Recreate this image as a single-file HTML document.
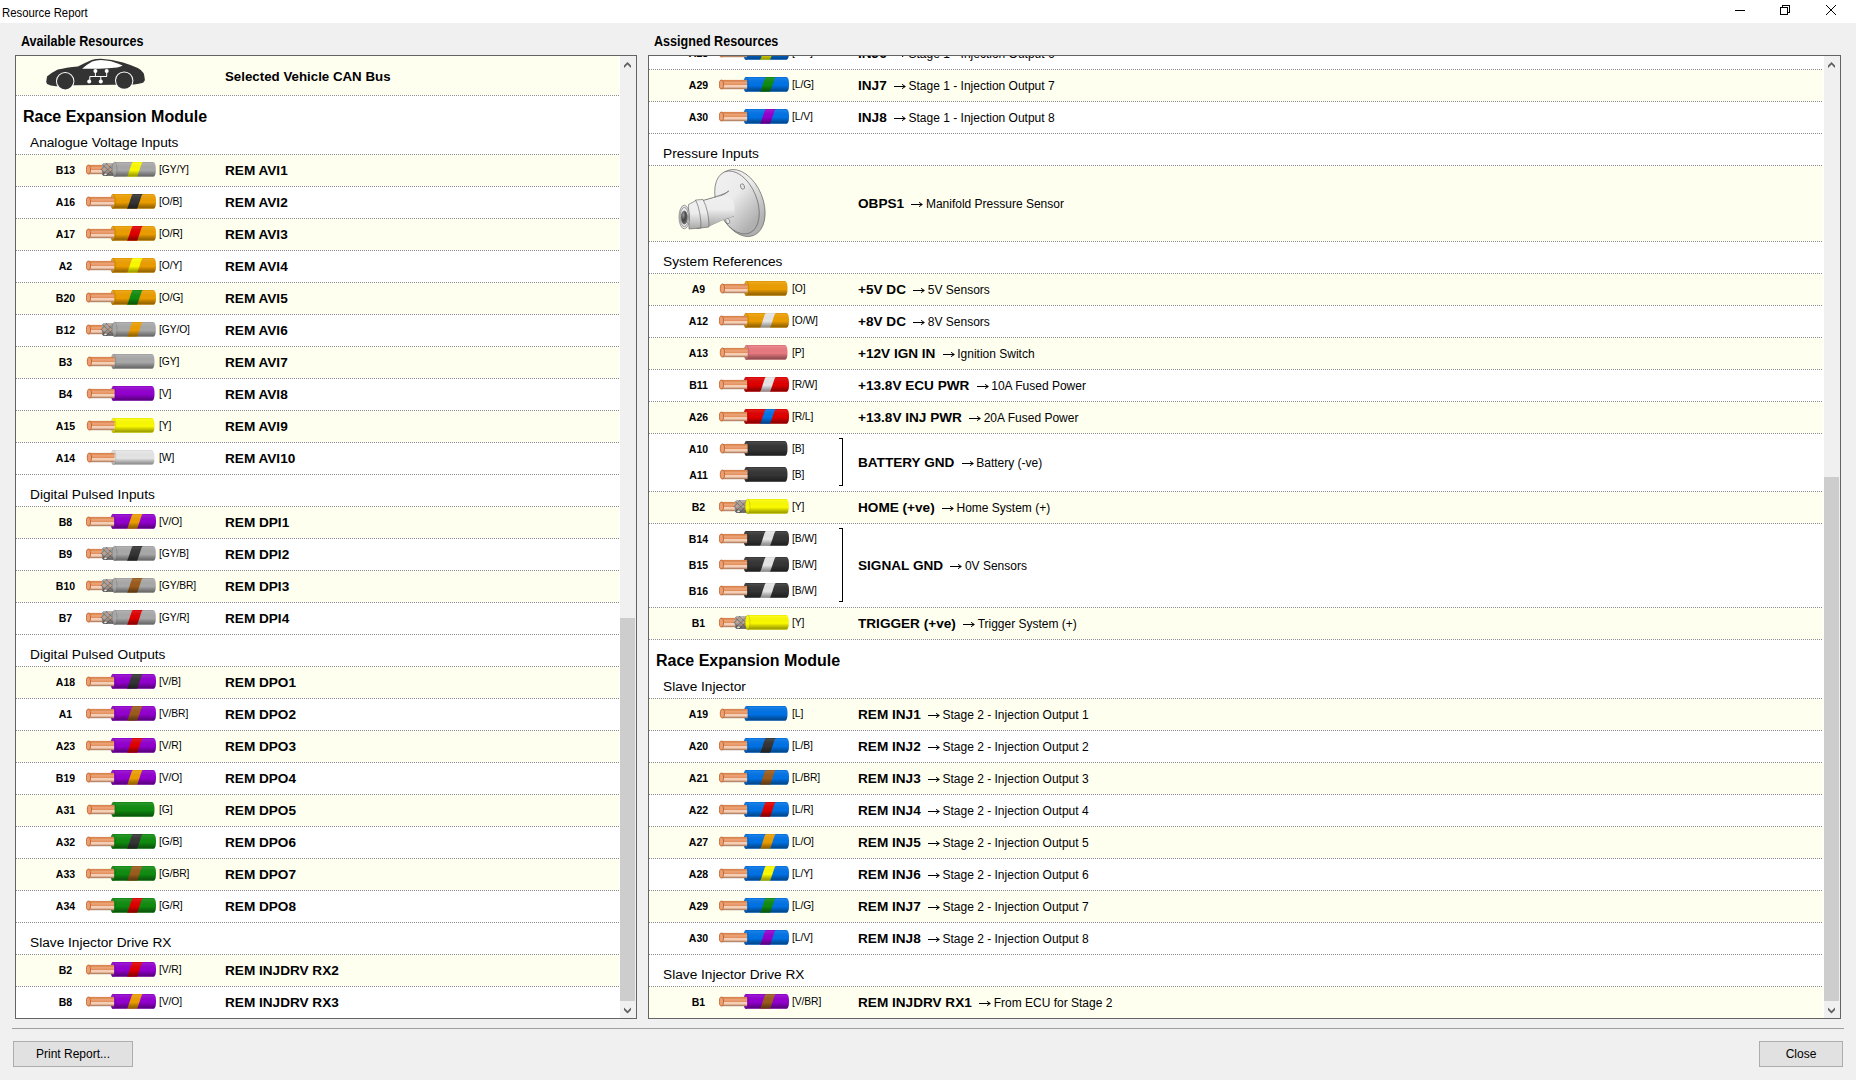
<!DOCTYPE html>
<html><head><meta charset="utf-8"><title>Resource Report</title>
<style>
*{box-sizing:border-box}
html,body{margin:0;padding:0}
body{width:1856px;height:1080px;background:#f0f0f0;position:relative;overflow:hidden;font-family:"Liberation Sans",sans-serif;color:#000}
.abs{position:absolute}
.title{position:absolute;left:0;top:0;width:1856px;height:23px;background:#fff}
.ttxt{position:absolute;left:2px;top:6px;font-size:12.2px;transform:scaleX(0.93);transform-origin:0 0}
.hdr{position:absolute;font-size:13.9px;font-weight:bold;top:33px;transform:scaleX(0.905);transform-origin:0 0}
.panel{position:absolute;top:55px;height:964px;border:1px solid #646464;background:#fff;overflow:hidden}
.content{position:absolute;left:0;top:0}
.bg{position:absolute;left:0;background:#fffff0}
.dl{position:absolute;left:0;height:1px;background:repeating-linear-gradient(90deg,#8c8c8c 0 1px,transparent 1px 2px)}
.pin{position:absolute;left:20px;width:59px;text-align:center;font-size:10.5px;font-weight:bold;line-height:14px}
.wi{position:absolute;left:70px;width:72px;height:22px}
.wi svg{display:block}
.cc{position:absolute;left:143px;font-size:10.3px;line-height:14px;letter-spacing:-0.1px}
.nm{position:absolute;left:209px;font-size:12px;line-height:14px;white-space:nowrap}
.nm b{font-size:13.6px;display:inline-block;transform:scaleY(0.885);transform-origin:0 80%}
.sv{font-size:13.3px;font-weight:bold}
.ar{display:inline-block;margin:0 2.5px 0 7.3px;vertical-align:1px}
.sec{position:absolute;left:14px;font-size:13.7px;line-height:16px;white-space:nowrap}
.mod{position:absolute;left:7px;font-size:16px;font-weight:bold;line-height:18px;white-space:nowrap}
.brk{position:absolute;left:190px;width:4px;border:1px solid #000;border-left:none}
.sb{position:absolute;top:0;width:16px;height:962px;background:#f0f0f0}
.thumb{position:absolute;left:0;width:15px;background:#cdcdcd}
.btn{position:absolute;top:1041px;height:26px;border:1px solid #adadad;background:#e1e1e1;font-size:12px;text-align:center;line-height:24px}
</style></head><body>
<div class="title"><div class="ttxt">Resource Report</div>
<div class="abs" style="left:1735px;top:10px;width:10px;height:1px;background:#000"></div>
<div class="abs" style="left:1782px;top:5px;width:8px;height:8px;border:1px solid #000"></div>
<div class="abs" style="left:1780px;top:7px;width:8px;height:8px;border:1px solid #000;background:#fff"></div>
<svg class="abs" style="left:1825px;top:4px" width="12" height="12" viewBox="0 0 12 12"><path d="M1,1 L11,11 M11,1 L1,11" stroke="#000" stroke-width="1"/></svg>
</div>
<div class="hdr" style="left:21px">Available Resources</div>
<div class="hdr" style="left:654px">Assigned Resources</div>
<div class="panel" style="left:15px;width:622px">
<div class="content"><div class="bg" style="top:0px;height:39px;width:603px"></div><div style="position:absolute;left:24px;top:0px"><svg width="112" height="36" viewBox="0 0 112 36">
<path d="M6.2,26 L7,20.5 Q11,17 17.8,13.6 Q26,11.5 37.9,10.4 Q45,7 51.6,4.1 Q56,2.6 61,2.7 Q72,3.5 83,6.5 Q91,9 97.8,11.9 Q102,14 103.7,17.2 Q104.6,20 104.9,24.3 L103.1,26.7 Q99,28 94.2,28.5 L74.7,28.7 L35.6,29.3 L16,30.2 Q10,29.5 7.1,27.9 Z" fill="#333"/>
<path d="M42.1,12.7 Q47,8.5 52.2,5.6 Q56,4 61,3.9 Q66,4 71.1,5.3 Q77,7 82.7,9.5 Q80,11 77.1,11.6 Q68,12.6 59.3,12.7 Z" fill="#fff"/>
<circle cx="25.2" cy="25.2" r="9.2" fill="#fff"/><circle cx="25.2" cy="25.2" r="8.2" fill="#333"/>
<circle cx="84.2" cy="24.6" r="9.2" fill="#fff"/><circle cx="84.2" cy="24.6" r="8.2" fill="#333"/>
<g stroke="#fff" stroke-width="1" fill="none"><path d="M55.4,15.1 V20.5 M66.7,15.1 V20.5 M49.8,20.5 H67 M49.8,20.5 V25.5 M60.8,21 V25.5"/></g>
<g fill="#fff"><circle cx="55.4" cy="15.1" r="2"/><circle cx="66.7" cy="15.1" r="2"/><circle cx="49.2" cy="25.5" r="2"/><circle cx="60.8" cy="25.5" r="2"/></g>
</svg></div><div class="nm sv" style="top:14px">Selected Vehicle CAN Bus</div><div class="dl" style="top:39px;width:603px"></div><div class="mod" style="top:52px">Race Expansion Module</div><div class="sec" style="top:79px">Analogue Voltage Inputs</div><div class="dl" style="top:98px;width:603px"></div><div class="bg" style="top:99px;height:31px;width:603px"></div><div class="pin" style="top:107px">B13</div><div class="wi" style="top:103px"><svg class="w" width="72" height="22" viewBox="0 0 72 22"><rect x="2.3" y="5.9" width="15.7" height="9.299999999999999" fill="url(#cu)"/><ellipse cx="2.4" cy="10.55" rx="2.1" ry="4.449999999999999" fill="#eaa074" stroke="#c25d24" stroke-width="0.9"/><path d="M17.0,4.2 L28.599999999999998,4.2 L28.599999999999998,16.9 L17.0,16.9 Q14.4,10.549999999999999 17.0,4.2 Z" fill="#a2a2a2"/><rect x="18.0" y="5.800000000000001" width="1.9" height="1.6" fill="#e2a078"/><rect x="22.0" y="5.4" width="1.9" height="1.6" fill="#e2a078"/><rect x="25.2" y="6.0" width="1.9" height="1.6" fill="#e2a078"/><rect x="17.2" y="9.0" width="1.9" height="1.6" fill="#e2a078"/><rect x="20.8" y="8.600000000000001" width="1.9" height="1.6" fill="#e2a078"/><rect x="24.4" y="9.4" width="1.9" height="1.6" fill="#e2a078"/><rect x="18.4" y="12.0" width="1.9" height="1.6" fill="#e2a078"/><rect x="22.2" y="11.8" width="1.9" height="1.6" fill="#e2a078"/><rect x="25.4" y="12.600000000000001" width="1.9" height="1.6" fill="#e2a078"/><rect x="19.6" y="14.600000000000001" width="1.9" height="1.6" fill="#e2a078"/><path d="M16.0,5.2 L28.599999999999998,16.9 M20.0,4.2 L28.599999999999998,12.2 M15.0,10.2 L21.0,16.9 M16.0,15.899999999999999 L28.599999999999998,4.2 M20.0,16.9 L28.599999999999998,8.899999999999999 M15.0,10.899999999999999 L21.0,4.2" stroke="#505050" stroke-width="0.5"/><path d="M17.0,4.2 L28.599999999999998,4.2 L28.599999999999998,16.9 L17.0,16.9 Q14.4,10.549999999999999 17.0,4.2 Z" fill="url(#shade)"/><ellipse cx="19.5" cy="15.3" rx="1.5" ry="0.8" fill="#f2f2f2"/><path d="M28.599999999999998,3.0 L67.0,3.0 C68.89999999999999,3.0 69.8,6.0 69.8,10.4 C69.8,14.8 68.89999999999999,17.8 67.0,17.8 L28.599999999999998,17.8 Z" fill="#a9a9a9"/><path d="M40.8,17.8 C42.3,17.8 45.4,3.0 46.9,3.0 L56.8,3.0 C55.3,3.0 52.2,17.8 50.7,17.8 Z" fill="#fbfb00"/><path d="M28.599999999999998,3.0 L67.0,3.0 C68.89999999999999,3.0 69.8,6.0 69.8,10.4 C69.8,14.8 68.89999999999999,17.8 67.0,17.8 L28.599999999999998,17.8 Z" fill="url(#shade)"/><ellipse cx="28.599999999999998" cy="10.4" rx="2.4" ry="7.4" fill="#a9a9a9"/><ellipse cx="28.599999999999998" cy="10.4" rx="2.4" ry="7.4" fill="url(#shade2)" stroke="rgba(0,0,0,0.22)" stroke-width="0.6"/></svg></div><div class="cc" style="top:107px">[GY/Y]</div><div class="nm" style="top:108px"><b>REM AVI1</b></div><div class="dl" style="top:130px;width:603px"></div><div class="pin" style="top:139px">A16</div><div class="wi" style="top:135px"><svg class="w" width="72" height="22" viewBox="0 0 72 22"><path d="M26.9,3.0 L67.2,3.0 C69.1,3.0 70.0,6.0 70.0,10.4 C70.0,14.8 69.1,17.8 67.2,17.8 L26.9,17.8 Z" fill="#ec9e00"/><path d="M40.8,17.8 C42.3,17.8 45.4,3.0 46.9,3.0 L56.8,3.0 C55.3,3.0 52.2,17.8 50.7,17.8 Z" fill="#353535"/><path d="M26.9,3.0 L67.2,3.0 C69.1,3.0 70.0,6.0 70.0,10.4 C70.0,14.8 69.1,17.8 67.2,17.8 L26.9,17.8 Z" fill="url(#shade)"/><ellipse cx="26.9" cy="10.4" rx="2.4" ry="7.4" fill="#ec9e00"/><ellipse cx="26.9" cy="10.4" rx="2.4" ry="7.4" fill="url(#shade2)" stroke="rgba(0,0,0,0.22)" stroke-width="0.6"/><rect x="2.3" y="5.9" width="25.799999999999997" height="9.299999999999999" fill="url(#cu)"/><ellipse cx="2.4" cy="10.55" rx="2.1" ry="4.449999999999999" fill="#eaa074" stroke="#c25d24" stroke-width="0.9"/></svg></div><div class="cc" style="top:139px">[O/B]</div><div class="nm" style="top:140px"><b>REM AVI2</b></div><div class="dl" style="top:162px;width:603px"></div><div class="bg" style="top:163px;height:31px;width:603px"></div><div class="pin" style="top:171px">A17</div><div class="wi" style="top:167px"><svg class="w" width="72" height="22" viewBox="0 0 72 22"><path d="M26.9,3.0 L67.2,3.0 C69.1,3.0 70.0,6.0 70.0,10.4 C70.0,14.8 69.1,17.8 67.2,17.8 L26.9,17.8 Z" fill="#ec9e00"/><path d="M40.8,17.8 C42.3,17.8 45.4,3.0 46.9,3.0 L56.8,3.0 C55.3,3.0 52.2,17.8 50.7,17.8 Z" fill="#e00000"/><path d="M26.9,3.0 L67.2,3.0 C69.1,3.0 70.0,6.0 70.0,10.4 C70.0,14.8 69.1,17.8 67.2,17.8 L26.9,17.8 Z" fill="url(#shade)"/><ellipse cx="26.9" cy="10.4" rx="2.4" ry="7.4" fill="#ec9e00"/><ellipse cx="26.9" cy="10.4" rx="2.4" ry="7.4" fill="url(#shade2)" stroke="rgba(0,0,0,0.22)" stroke-width="0.6"/><rect x="2.3" y="5.9" width="25.799999999999997" height="9.299999999999999" fill="url(#cu)"/><ellipse cx="2.4" cy="10.55" rx="2.1" ry="4.449999999999999" fill="#eaa074" stroke="#c25d24" stroke-width="0.9"/></svg></div><div class="cc" style="top:171px">[O/R]</div><div class="nm" style="top:172px"><b>REM AVI3</b></div><div class="dl" style="top:194px;width:603px"></div><div class="pin" style="top:203px">A2</div><div class="wi" style="top:199px"><svg class="w" width="72" height="22" viewBox="0 0 72 22"><path d="M26.9,3.0 L67.2,3.0 C69.1,3.0 70.0,6.0 70.0,10.4 C70.0,14.8 69.1,17.8 67.2,17.8 L26.9,17.8 Z" fill="#ec9e00"/><path d="M40.8,17.8 C42.3,17.8 45.4,3.0 46.9,3.0 L56.8,3.0 C55.3,3.0 52.2,17.8 50.7,17.8 Z" fill="#fbfb00"/><path d="M26.9,3.0 L67.2,3.0 C69.1,3.0 70.0,6.0 70.0,10.4 C70.0,14.8 69.1,17.8 67.2,17.8 L26.9,17.8 Z" fill="url(#shade)"/><ellipse cx="26.9" cy="10.4" rx="2.4" ry="7.4" fill="#ec9e00"/><ellipse cx="26.9" cy="10.4" rx="2.4" ry="7.4" fill="url(#shade2)" stroke="rgba(0,0,0,0.22)" stroke-width="0.6"/><rect x="2.3" y="5.9" width="25.799999999999997" height="9.299999999999999" fill="url(#cu)"/><ellipse cx="2.4" cy="10.55" rx="2.1" ry="4.449999999999999" fill="#eaa074" stroke="#c25d24" stroke-width="0.9"/></svg></div><div class="cc" style="top:203px">[O/Y]</div><div class="nm" style="top:204px"><b>REM AVI4</b></div><div class="dl" style="top:226px;width:603px"></div><div class="bg" style="top:227px;height:31px;width:603px"></div><div class="pin" style="top:235px">B20</div><div class="wi" style="top:231px"><svg class="w" width="72" height="22" viewBox="0 0 72 22"><path d="M26.9,3.0 L67.2,3.0 C69.1,3.0 70.0,6.0 70.0,10.4 C70.0,14.8 69.1,17.8 67.2,17.8 L26.9,17.8 Z" fill="#ec9e00"/><path d="M40.8,17.8 C42.3,17.8 45.4,3.0 46.9,3.0 L56.8,3.0 C55.3,3.0 52.2,17.8 50.7,17.8 Z" fill="#108c10"/><path d="M26.9,3.0 L67.2,3.0 C69.1,3.0 70.0,6.0 70.0,10.4 C70.0,14.8 69.1,17.8 67.2,17.8 L26.9,17.8 Z" fill="url(#shade)"/><ellipse cx="26.9" cy="10.4" rx="2.4" ry="7.4" fill="#ec9e00"/><ellipse cx="26.9" cy="10.4" rx="2.4" ry="7.4" fill="url(#shade2)" stroke="rgba(0,0,0,0.22)" stroke-width="0.6"/><rect x="2.3" y="5.9" width="25.799999999999997" height="9.299999999999999" fill="url(#cu)"/><ellipse cx="2.4" cy="10.55" rx="2.1" ry="4.449999999999999" fill="#eaa074" stroke="#c25d24" stroke-width="0.9"/></svg></div><div class="cc" style="top:235px">[O/G]</div><div class="nm" style="top:236px"><b>REM AVI5</b></div><div class="dl" style="top:258px;width:603px"></div><div class="pin" style="top:267px">B12</div><div class="wi" style="top:263px"><svg class="w" width="72" height="22" viewBox="0 0 72 22"><rect x="2.3" y="5.9" width="15.7" height="9.299999999999999" fill="url(#cu)"/><ellipse cx="2.4" cy="10.55" rx="2.1" ry="4.449999999999999" fill="#eaa074" stroke="#c25d24" stroke-width="0.9"/><path d="M17.0,4.2 L28.599999999999998,4.2 L28.599999999999998,16.9 L17.0,16.9 Q14.4,10.549999999999999 17.0,4.2 Z" fill="#a2a2a2"/><rect x="18.0" y="5.800000000000001" width="1.9" height="1.6" fill="#e2a078"/><rect x="22.0" y="5.4" width="1.9" height="1.6" fill="#e2a078"/><rect x="25.2" y="6.0" width="1.9" height="1.6" fill="#e2a078"/><rect x="17.2" y="9.0" width="1.9" height="1.6" fill="#e2a078"/><rect x="20.8" y="8.600000000000001" width="1.9" height="1.6" fill="#e2a078"/><rect x="24.4" y="9.4" width="1.9" height="1.6" fill="#e2a078"/><rect x="18.4" y="12.0" width="1.9" height="1.6" fill="#e2a078"/><rect x="22.2" y="11.8" width="1.9" height="1.6" fill="#e2a078"/><rect x="25.4" y="12.600000000000001" width="1.9" height="1.6" fill="#e2a078"/><rect x="19.6" y="14.600000000000001" width="1.9" height="1.6" fill="#e2a078"/><path d="M16.0,5.2 L28.599999999999998,16.9 M20.0,4.2 L28.599999999999998,12.2 M15.0,10.2 L21.0,16.9 M16.0,15.899999999999999 L28.599999999999998,4.2 M20.0,16.9 L28.599999999999998,8.899999999999999 M15.0,10.899999999999999 L21.0,4.2" stroke="#505050" stroke-width="0.5"/><path d="M17.0,4.2 L28.599999999999998,4.2 L28.599999999999998,16.9 L17.0,16.9 Q14.4,10.549999999999999 17.0,4.2 Z" fill="url(#shade)"/><ellipse cx="19.5" cy="15.3" rx="1.5" ry="0.8" fill="#f2f2f2"/><path d="M28.599999999999998,3.0 L67.0,3.0 C68.89999999999999,3.0 69.8,6.0 69.8,10.4 C69.8,14.8 68.89999999999999,17.8 67.0,17.8 L28.599999999999998,17.8 Z" fill="#a9a9a9"/><path d="M40.8,17.8 C42.3,17.8 45.4,3.0 46.9,3.0 L56.8,3.0 C55.3,3.0 52.2,17.8 50.7,17.8 Z" fill="#ec9e00"/><path d="M28.599999999999998,3.0 L67.0,3.0 C68.89999999999999,3.0 69.8,6.0 69.8,10.4 C69.8,14.8 68.89999999999999,17.8 67.0,17.8 L28.599999999999998,17.8 Z" fill="url(#shade)"/><ellipse cx="28.599999999999998" cy="10.4" rx="2.4" ry="7.4" fill="#a9a9a9"/><ellipse cx="28.599999999999998" cy="10.4" rx="2.4" ry="7.4" fill="url(#shade2)" stroke="rgba(0,0,0,0.22)" stroke-width="0.6"/></svg></div><div class="cc" style="top:267px">[GY/O]</div><div class="nm" style="top:268px"><b>REM AVI6</b></div><div class="dl" style="top:290px;width:603px"></div><div class="bg" style="top:291px;height:31px;width:603px"></div><div class="pin" style="top:299px">B3</div><div class="wi" style="top:295px"><svg class="w" width="72" height="22" viewBox="0 0 72 22"><path d="M27.4,3.0 L65.7,3.0 C67.6,3.0 68.5,6.0 68.5,10.4 C68.5,14.8 67.6,17.8 65.7,17.8 L27.4,17.8 Z" fill="#a9a9a9"/><path d="M27.4,3.0 L65.7,3.0 C67.6,3.0 68.5,6.0 68.5,10.4 C68.5,14.8 67.6,17.8 65.7,17.8 L27.4,17.8 Z" fill="url(#shade)"/><ellipse cx="27.4" cy="10.4" rx="2.4" ry="7.4" fill="#a9a9a9"/><ellipse cx="27.4" cy="10.4" rx="2.4" ry="7.4" fill="url(#shade2)" stroke="rgba(0,0,0,0.22)" stroke-width="0.6"/><rect x="3.3" y="5.9" width="25.299999999999997" height="9.299999999999999" fill="url(#cu)"/><ellipse cx="3.4" cy="10.55" rx="2.1" ry="4.449999999999999" fill="#eaa074" stroke="#c25d24" stroke-width="0.9"/></svg></div><div class="cc" style="top:299px">[GY]</div><div class="nm" style="top:300px"><b>REM AVI7</b></div><div class="dl" style="top:322px;width:603px"></div><div class="pin" style="top:331px">B4</div><div class="wi" style="top:327px"><svg class="w" width="72" height="22" viewBox="0 0 72 22"><path d="M27.4,3.0 L65.7,3.0 C67.6,3.0 68.5,6.0 68.5,10.4 C68.5,14.8 67.6,17.8 65.7,17.8 L27.4,17.8 Z" fill="#9300cf"/><path d="M27.4,3.0 L65.7,3.0 C67.6,3.0 68.5,6.0 68.5,10.4 C68.5,14.8 67.6,17.8 65.7,17.8 L27.4,17.8 Z" fill="url(#shade)"/><ellipse cx="27.4" cy="10.4" rx="2.4" ry="7.4" fill="#9300cf"/><ellipse cx="27.4" cy="10.4" rx="2.4" ry="7.4" fill="url(#shade2)" stroke="rgba(0,0,0,0.22)" stroke-width="0.6"/><rect x="3.3" y="5.9" width="25.299999999999997" height="9.299999999999999" fill="url(#cu)"/><ellipse cx="3.4" cy="10.55" rx="2.1" ry="4.449999999999999" fill="#eaa074" stroke="#c25d24" stroke-width="0.9"/></svg></div><div class="cc" style="top:331px">[V]</div><div class="nm" style="top:332px"><b>REM AVI8</b></div><div class="dl" style="top:354px;width:603px"></div><div class="bg" style="top:355px;height:31px;width:603px"></div><div class="pin" style="top:363px">A15</div><div class="wi" style="top:359px"><svg class="w" width="72" height="22" viewBox="0 0 72 22"><path d="M27.4,3.0 L65.7,3.0 C67.6,3.0 68.5,6.0 68.5,10.4 C68.5,14.8 67.6,17.8 65.7,17.8 L27.4,17.8 Z" fill="#fbfb00"/><path d="M27.4,3.0 L65.7,3.0 C67.6,3.0 68.5,6.0 68.5,10.4 C68.5,14.8 67.6,17.8 65.7,17.8 L27.4,17.8 Z" fill="url(#shade)"/><ellipse cx="27.4" cy="10.4" rx="2.4" ry="7.4" fill="#fbfb00"/><ellipse cx="27.4" cy="10.4" rx="2.4" ry="7.4" fill="url(#shade2)" stroke="rgba(0,0,0,0.22)" stroke-width="0.6"/><rect x="3.3" y="5.9" width="25.299999999999997" height="9.299999999999999" fill="url(#cu)"/><ellipse cx="3.4" cy="10.55" rx="2.1" ry="4.449999999999999" fill="#eaa074" stroke="#c25d24" stroke-width="0.9"/></svg></div><div class="cc" style="top:363px">[Y]</div><div class="nm" style="top:364px"><b>REM AVI9</b></div><div class="dl" style="top:386px;width:603px"></div><div class="pin" style="top:395px">A14</div><div class="wi" style="top:391px"><svg class="w" width="72" height="22" viewBox="0 0 72 22"><path d="M27.4,3.0 L65.7,3.0 C67.6,3.0 68.5,6.0 68.5,10.4 C68.5,14.8 67.6,17.8 65.7,17.8 L27.4,17.8 Z" fill="#e6e6e6"/><path d="M27.4,3.0 L65.7,3.0 C67.6,3.0 68.5,6.0 68.5,10.4 C68.5,14.8 67.6,17.8 65.7,17.8 L27.4,17.8 Z" fill="url(#shade)"/><ellipse cx="27.4" cy="10.4" rx="2.4" ry="7.4" fill="#e6e6e6"/><ellipse cx="27.4" cy="10.4" rx="2.4" ry="7.4" fill="url(#shade2)" stroke="rgba(0,0,0,0.22)" stroke-width="0.6"/><rect x="3.3" y="5.9" width="25.299999999999997" height="9.299999999999999" fill="url(#cu)"/><ellipse cx="3.4" cy="10.55" rx="2.1" ry="4.449999999999999" fill="#eaa074" stroke="#c25d24" stroke-width="0.9"/></svg></div><div class="cc" style="top:395px">[W]</div><div class="nm" style="top:396px"><b>REM AVI10</b></div><div class="dl" style="top:418px;width:603px"></div><div class="sec" style="top:431px">Digital Pulsed Inputs</div><div class="dl" style="top:450px;width:603px"></div><div class="bg" style="top:451px;height:31px;width:603px"></div><div class="pin" style="top:459px">B8</div><div class="wi" style="top:455px"><svg class="w" width="72" height="22" viewBox="0 0 72 22"><path d="M26.9,3.0 L67.2,3.0 C69.1,3.0 70.0,6.0 70.0,10.4 C70.0,14.8 69.1,17.8 67.2,17.8 L26.9,17.8 Z" fill="#9300cf"/><path d="M40.8,17.8 C42.3,17.8 45.4,3.0 46.9,3.0 L56.8,3.0 C55.3,3.0 52.2,17.8 50.7,17.8 Z" fill="#ec9e00"/><path d="M26.9,3.0 L67.2,3.0 C69.1,3.0 70.0,6.0 70.0,10.4 C70.0,14.8 69.1,17.8 67.2,17.8 L26.9,17.8 Z" fill="url(#shade)"/><ellipse cx="26.9" cy="10.4" rx="2.4" ry="7.4" fill="#9300cf"/><ellipse cx="26.9" cy="10.4" rx="2.4" ry="7.4" fill="url(#shade2)" stroke="rgba(0,0,0,0.22)" stroke-width="0.6"/><rect x="2.3" y="5.9" width="25.799999999999997" height="9.299999999999999" fill="url(#cu)"/><ellipse cx="2.4" cy="10.55" rx="2.1" ry="4.449999999999999" fill="#eaa074" stroke="#c25d24" stroke-width="0.9"/></svg></div><div class="cc" style="top:459px">[V/O]</div><div class="nm" style="top:460px"><b>REM DPI1</b></div><div class="dl" style="top:482px;width:603px"></div><div class="pin" style="top:491px">B9</div><div class="wi" style="top:487px"><svg class="w" width="72" height="22" viewBox="0 0 72 22"><rect x="2.3" y="5.9" width="15.7" height="9.299999999999999" fill="url(#cu)"/><ellipse cx="2.4" cy="10.55" rx="2.1" ry="4.449999999999999" fill="#eaa074" stroke="#c25d24" stroke-width="0.9"/><path d="M17.0,4.2 L28.599999999999998,4.2 L28.599999999999998,16.9 L17.0,16.9 Q14.4,10.549999999999999 17.0,4.2 Z" fill="#a2a2a2"/><rect x="18.0" y="5.800000000000001" width="1.9" height="1.6" fill="#e2a078"/><rect x="22.0" y="5.4" width="1.9" height="1.6" fill="#e2a078"/><rect x="25.2" y="6.0" width="1.9" height="1.6" fill="#e2a078"/><rect x="17.2" y="9.0" width="1.9" height="1.6" fill="#e2a078"/><rect x="20.8" y="8.600000000000001" width="1.9" height="1.6" fill="#e2a078"/><rect x="24.4" y="9.4" width="1.9" height="1.6" fill="#e2a078"/><rect x="18.4" y="12.0" width="1.9" height="1.6" fill="#e2a078"/><rect x="22.2" y="11.8" width="1.9" height="1.6" fill="#e2a078"/><rect x="25.4" y="12.600000000000001" width="1.9" height="1.6" fill="#e2a078"/><rect x="19.6" y="14.600000000000001" width="1.9" height="1.6" fill="#e2a078"/><path d="M16.0,5.2 L28.599999999999998,16.9 M20.0,4.2 L28.599999999999998,12.2 M15.0,10.2 L21.0,16.9 M16.0,15.899999999999999 L28.599999999999998,4.2 M20.0,16.9 L28.599999999999998,8.899999999999999 M15.0,10.899999999999999 L21.0,4.2" stroke="#505050" stroke-width="0.5"/><path d="M17.0,4.2 L28.599999999999998,4.2 L28.599999999999998,16.9 L17.0,16.9 Q14.4,10.549999999999999 17.0,4.2 Z" fill="url(#shade)"/><ellipse cx="19.5" cy="15.3" rx="1.5" ry="0.8" fill="#f2f2f2"/><path d="M28.599999999999998,3.0 L67.0,3.0 C68.89999999999999,3.0 69.8,6.0 69.8,10.4 C69.8,14.8 68.89999999999999,17.8 67.0,17.8 L28.599999999999998,17.8 Z" fill="#a9a9a9"/><path d="M40.8,17.8 C42.3,17.8 45.4,3.0 46.9,3.0 L56.8,3.0 C55.3,3.0 52.2,17.8 50.7,17.8 Z" fill="#353535"/><path d="M28.599999999999998,3.0 L67.0,3.0 C68.89999999999999,3.0 69.8,6.0 69.8,10.4 C69.8,14.8 68.89999999999999,17.8 67.0,17.8 L28.599999999999998,17.8 Z" fill="url(#shade)"/><ellipse cx="28.599999999999998" cy="10.4" rx="2.4" ry="7.4" fill="#a9a9a9"/><ellipse cx="28.599999999999998" cy="10.4" rx="2.4" ry="7.4" fill="url(#shade2)" stroke="rgba(0,0,0,0.22)" stroke-width="0.6"/></svg></div><div class="cc" style="top:491px">[GY/B]</div><div class="nm" style="top:492px"><b>REM DPI2</b></div><div class="dl" style="top:514px;width:603px"></div><div class="bg" style="top:515px;height:31px;width:603px"></div><div class="pin" style="top:523px">B10</div><div class="wi" style="top:519px"><svg class="w" width="72" height="22" viewBox="0 0 72 22"><rect x="2.3" y="5.9" width="15.7" height="9.299999999999999" fill="url(#cu)"/><ellipse cx="2.4" cy="10.55" rx="2.1" ry="4.449999999999999" fill="#eaa074" stroke="#c25d24" stroke-width="0.9"/><path d="M17.0,4.2 L28.599999999999998,4.2 L28.599999999999998,16.9 L17.0,16.9 Q14.4,10.549999999999999 17.0,4.2 Z" fill="#a2a2a2"/><rect x="18.0" y="5.800000000000001" width="1.9" height="1.6" fill="#e2a078"/><rect x="22.0" y="5.4" width="1.9" height="1.6" fill="#e2a078"/><rect x="25.2" y="6.0" width="1.9" height="1.6" fill="#e2a078"/><rect x="17.2" y="9.0" width="1.9" height="1.6" fill="#e2a078"/><rect x="20.8" y="8.600000000000001" width="1.9" height="1.6" fill="#e2a078"/><rect x="24.4" y="9.4" width="1.9" height="1.6" fill="#e2a078"/><rect x="18.4" y="12.0" width="1.9" height="1.6" fill="#e2a078"/><rect x="22.2" y="11.8" width="1.9" height="1.6" fill="#e2a078"/><rect x="25.4" y="12.600000000000001" width="1.9" height="1.6" fill="#e2a078"/><rect x="19.6" y="14.600000000000001" width="1.9" height="1.6" fill="#e2a078"/><path d="M16.0,5.2 L28.599999999999998,16.9 M20.0,4.2 L28.599999999999998,12.2 M15.0,10.2 L21.0,16.9 M16.0,15.899999999999999 L28.599999999999998,4.2 M20.0,16.9 L28.599999999999998,8.899999999999999 M15.0,10.899999999999999 L21.0,4.2" stroke="#505050" stroke-width="0.5"/><path d="M17.0,4.2 L28.599999999999998,4.2 L28.599999999999998,16.9 L17.0,16.9 Q14.4,10.549999999999999 17.0,4.2 Z" fill="url(#shade)"/><ellipse cx="19.5" cy="15.3" rx="1.5" ry="0.8" fill="#f2f2f2"/><path d="M28.599999999999998,3.0 L67.0,3.0 C68.89999999999999,3.0 69.8,6.0 69.8,10.4 C69.8,14.8 68.89999999999999,17.8 67.0,17.8 L28.599999999999998,17.8 Z" fill="#a9a9a9"/><path d="M40.8,17.8 C42.3,17.8 45.4,3.0 46.9,3.0 L56.8,3.0 C55.3,3.0 52.2,17.8 50.7,17.8 Z" fill="#9c5c1c"/><path d="M28.599999999999998,3.0 L67.0,3.0 C68.89999999999999,3.0 69.8,6.0 69.8,10.4 C69.8,14.8 68.89999999999999,17.8 67.0,17.8 L28.599999999999998,17.8 Z" fill="url(#shade)"/><ellipse cx="28.599999999999998" cy="10.4" rx="2.4" ry="7.4" fill="#a9a9a9"/><ellipse cx="28.599999999999998" cy="10.4" rx="2.4" ry="7.4" fill="url(#shade2)" stroke="rgba(0,0,0,0.22)" stroke-width="0.6"/></svg></div><div class="cc" style="top:523px">[GY/BR]</div><div class="nm" style="top:524px"><b>REM DPI3</b></div><div class="dl" style="top:546px;width:603px"></div><div class="pin" style="top:555px">B7</div><div class="wi" style="top:551px"><svg class="w" width="72" height="22" viewBox="0 0 72 22"><rect x="2.3" y="5.9" width="15.7" height="9.299999999999999" fill="url(#cu)"/><ellipse cx="2.4" cy="10.55" rx="2.1" ry="4.449999999999999" fill="#eaa074" stroke="#c25d24" stroke-width="0.9"/><path d="M17.0,4.2 L28.599999999999998,4.2 L28.599999999999998,16.9 L17.0,16.9 Q14.4,10.549999999999999 17.0,4.2 Z" fill="#a2a2a2"/><rect x="18.0" y="5.800000000000001" width="1.9" height="1.6" fill="#e2a078"/><rect x="22.0" y="5.4" width="1.9" height="1.6" fill="#e2a078"/><rect x="25.2" y="6.0" width="1.9" height="1.6" fill="#e2a078"/><rect x="17.2" y="9.0" width="1.9" height="1.6" fill="#e2a078"/><rect x="20.8" y="8.600000000000001" width="1.9" height="1.6" fill="#e2a078"/><rect x="24.4" y="9.4" width="1.9" height="1.6" fill="#e2a078"/><rect x="18.4" y="12.0" width="1.9" height="1.6" fill="#e2a078"/><rect x="22.2" y="11.8" width="1.9" height="1.6" fill="#e2a078"/><rect x="25.4" y="12.600000000000001" width="1.9" height="1.6" fill="#e2a078"/><rect x="19.6" y="14.600000000000001" width="1.9" height="1.6" fill="#e2a078"/><path d="M16.0,5.2 L28.599999999999998,16.9 M20.0,4.2 L28.599999999999998,12.2 M15.0,10.2 L21.0,16.9 M16.0,15.899999999999999 L28.599999999999998,4.2 M20.0,16.9 L28.599999999999998,8.899999999999999 M15.0,10.899999999999999 L21.0,4.2" stroke="#505050" stroke-width="0.5"/><path d="M17.0,4.2 L28.599999999999998,4.2 L28.599999999999998,16.9 L17.0,16.9 Q14.4,10.549999999999999 17.0,4.2 Z" fill="url(#shade)"/><ellipse cx="19.5" cy="15.3" rx="1.5" ry="0.8" fill="#f2f2f2"/><path d="M28.599999999999998,3.0 L67.0,3.0 C68.89999999999999,3.0 69.8,6.0 69.8,10.4 C69.8,14.8 68.89999999999999,17.8 67.0,17.8 L28.599999999999998,17.8 Z" fill="#a9a9a9"/><path d="M40.8,17.8 C42.3,17.8 45.4,3.0 46.9,3.0 L56.8,3.0 C55.3,3.0 52.2,17.8 50.7,17.8 Z" fill="#e00000"/><path d="M28.599999999999998,3.0 L67.0,3.0 C68.89999999999999,3.0 69.8,6.0 69.8,10.4 C69.8,14.8 68.89999999999999,17.8 67.0,17.8 L28.599999999999998,17.8 Z" fill="url(#shade)"/><ellipse cx="28.599999999999998" cy="10.4" rx="2.4" ry="7.4" fill="#a9a9a9"/><ellipse cx="28.599999999999998" cy="10.4" rx="2.4" ry="7.4" fill="url(#shade2)" stroke="rgba(0,0,0,0.22)" stroke-width="0.6"/></svg></div><div class="cc" style="top:555px">[GY/R]</div><div class="nm" style="top:556px"><b>REM DPI4</b></div><div class="dl" style="top:578px;width:603px"></div><div class="sec" style="top:591px">Digital Pulsed Outputs</div><div class="dl" style="top:610px;width:603px"></div><div class="bg" style="top:611px;height:31px;width:603px"></div><div class="pin" style="top:619px">A18</div><div class="wi" style="top:615px"><svg class="w" width="72" height="22" viewBox="0 0 72 22"><path d="M26.9,3.0 L67.2,3.0 C69.1,3.0 70.0,6.0 70.0,10.4 C70.0,14.8 69.1,17.8 67.2,17.8 L26.9,17.8 Z" fill="#9300cf"/><path d="M40.8,17.8 C42.3,17.8 45.4,3.0 46.9,3.0 L56.8,3.0 C55.3,3.0 52.2,17.8 50.7,17.8 Z" fill="#353535"/><path d="M26.9,3.0 L67.2,3.0 C69.1,3.0 70.0,6.0 70.0,10.4 C70.0,14.8 69.1,17.8 67.2,17.8 L26.9,17.8 Z" fill="url(#shade)"/><ellipse cx="26.9" cy="10.4" rx="2.4" ry="7.4" fill="#9300cf"/><ellipse cx="26.9" cy="10.4" rx="2.4" ry="7.4" fill="url(#shade2)" stroke="rgba(0,0,0,0.22)" stroke-width="0.6"/><rect x="2.3" y="5.9" width="25.799999999999997" height="9.299999999999999" fill="url(#cu)"/><ellipse cx="2.4" cy="10.55" rx="2.1" ry="4.449999999999999" fill="#eaa074" stroke="#c25d24" stroke-width="0.9"/></svg></div><div class="cc" style="top:619px">[V/B]</div><div class="nm" style="top:620px"><b>REM DPO1</b></div><div class="dl" style="top:642px;width:603px"></div><div class="pin" style="top:651px">A1</div><div class="wi" style="top:647px"><svg class="w" width="72" height="22" viewBox="0 0 72 22"><path d="M26.9,3.0 L67.2,3.0 C69.1,3.0 70.0,6.0 70.0,10.4 C70.0,14.8 69.1,17.8 67.2,17.8 L26.9,17.8 Z" fill="#9300cf"/><path d="M40.8,17.8 C42.3,17.8 45.4,3.0 46.9,3.0 L56.8,3.0 C55.3,3.0 52.2,17.8 50.7,17.8 Z" fill="#9c5c1c"/><path d="M26.9,3.0 L67.2,3.0 C69.1,3.0 70.0,6.0 70.0,10.4 C70.0,14.8 69.1,17.8 67.2,17.8 L26.9,17.8 Z" fill="url(#shade)"/><ellipse cx="26.9" cy="10.4" rx="2.4" ry="7.4" fill="#9300cf"/><ellipse cx="26.9" cy="10.4" rx="2.4" ry="7.4" fill="url(#shade2)" stroke="rgba(0,0,0,0.22)" stroke-width="0.6"/><rect x="2.3" y="5.9" width="25.799999999999997" height="9.299999999999999" fill="url(#cu)"/><ellipse cx="2.4" cy="10.55" rx="2.1" ry="4.449999999999999" fill="#eaa074" stroke="#c25d24" stroke-width="0.9"/></svg></div><div class="cc" style="top:651px">[V/BR]</div><div class="nm" style="top:652px"><b>REM DPO2</b></div><div class="dl" style="top:674px;width:603px"></div><div class="bg" style="top:675px;height:31px;width:603px"></div><div class="pin" style="top:683px">A23</div><div class="wi" style="top:679px"><svg class="w" width="72" height="22" viewBox="0 0 72 22"><path d="M26.9,3.0 L67.2,3.0 C69.1,3.0 70.0,6.0 70.0,10.4 C70.0,14.8 69.1,17.8 67.2,17.8 L26.9,17.8 Z" fill="#9300cf"/><path d="M40.8,17.8 C42.3,17.8 45.4,3.0 46.9,3.0 L56.8,3.0 C55.3,3.0 52.2,17.8 50.7,17.8 Z" fill="#e00000"/><path d="M26.9,3.0 L67.2,3.0 C69.1,3.0 70.0,6.0 70.0,10.4 C70.0,14.8 69.1,17.8 67.2,17.8 L26.9,17.8 Z" fill="url(#shade)"/><ellipse cx="26.9" cy="10.4" rx="2.4" ry="7.4" fill="#9300cf"/><ellipse cx="26.9" cy="10.4" rx="2.4" ry="7.4" fill="url(#shade2)" stroke="rgba(0,0,0,0.22)" stroke-width="0.6"/><rect x="2.3" y="5.9" width="25.799999999999997" height="9.299999999999999" fill="url(#cu)"/><ellipse cx="2.4" cy="10.55" rx="2.1" ry="4.449999999999999" fill="#eaa074" stroke="#c25d24" stroke-width="0.9"/></svg></div><div class="cc" style="top:683px">[V/R]</div><div class="nm" style="top:684px"><b>REM DPO3</b></div><div class="dl" style="top:706px;width:603px"></div><div class="pin" style="top:715px">B19</div><div class="wi" style="top:711px"><svg class="w" width="72" height="22" viewBox="0 0 72 22"><path d="M26.9,3.0 L67.2,3.0 C69.1,3.0 70.0,6.0 70.0,10.4 C70.0,14.8 69.1,17.8 67.2,17.8 L26.9,17.8 Z" fill="#9300cf"/><path d="M40.8,17.8 C42.3,17.8 45.4,3.0 46.9,3.0 L56.8,3.0 C55.3,3.0 52.2,17.8 50.7,17.8 Z" fill="#ec9e00"/><path d="M26.9,3.0 L67.2,3.0 C69.1,3.0 70.0,6.0 70.0,10.4 C70.0,14.8 69.1,17.8 67.2,17.8 L26.9,17.8 Z" fill="url(#shade)"/><ellipse cx="26.9" cy="10.4" rx="2.4" ry="7.4" fill="#9300cf"/><ellipse cx="26.9" cy="10.4" rx="2.4" ry="7.4" fill="url(#shade2)" stroke="rgba(0,0,0,0.22)" stroke-width="0.6"/><rect x="2.3" y="5.9" width="25.799999999999997" height="9.299999999999999" fill="url(#cu)"/><ellipse cx="2.4" cy="10.55" rx="2.1" ry="4.449999999999999" fill="#eaa074" stroke="#c25d24" stroke-width="0.9"/></svg></div><div class="cc" style="top:715px">[V/O]</div><div class="nm" style="top:716px"><b>REM DPO4</b></div><div class="dl" style="top:738px;width:603px"></div><div class="bg" style="top:739px;height:31px;width:603px"></div><div class="pin" style="top:747px">A31</div><div class="wi" style="top:743px"><svg class="w" width="72" height="22" viewBox="0 0 72 22"><path d="M27.4,3.0 L65.7,3.0 C67.6,3.0 68.5,6.0 68.5,10.4 C68.5,14.8 67.6,17.8 65.7,17.8 L27.4,17.8 Z" fill="#108c10"/><path d="M27.4,3.0 L65.7,3.0 C67.6,3.0 68.5,6.0 68.5,10.4 C68.5,14.8 67.6,17.8 65.7,17.8 L27.4,17.8 Z" fill="url(#shade)"/><ellipse cx="27.4" cy="10.4" rx="2.4" ry="7.4" fill="#108c10"/><ellipse cx="27.4" cy="10.4" rx="2.4" ry="7.4" fill="url(#shade2)" stroke="rgba(0,0,0,0.22)" stroke-width="0.6"/><rect x="3.3" y="5.9" width="25.299999999999997" height="9.299999999999999" fill="url(#cu)"/><ellipse cx="3.4" cy="10.55" rx="2.1" ry="4.449999999999999" fill="#eaa074" stroke="#c25d24" stroke-width="0.9"/></svg></div><div class="cc" style="top:747px">[G]</div><div class="nm" style="top:748px"><b>REM DPO5</b></div><div class="dl" style="top:770px;width:603px"></div><div class="pin" style="top:779px">A32</div><div class="wi" style="top:775px"><svg class="w" width="72" height="22" viewBox="0 0 72 22"><path d="M26.9,3.0 L67.2,3.0 C69.1,3.0 70.0,6.0 70.0,10.4 C70.0,14.8 69.1,17.8 67.2,17.8 L26.9,17.8 Z" fill="#108c10"/><path d="M40.8,17.8 C42.3,17.8 45.4,3.0 46.9,3.0 L56.8,3.0 C55.3,3.0 52.2,17.8 50.7,17.8 Z" fill="#353535"/><path d="M26.9,3.0 L67.2,3.0 C69.1,3.0 70.0,6.0 70.0,10.4 C70.0,14.8 69.1,17.8 67.2,17.8 L26.9,17.8 Z" fill="url(#shade)"/><ellipse cx="26.9" cy="10.4" rx="2.4" ry="7.4" fill="#108c10"/><ellipse cx="26.9" cy="10.4" rx="2.4" ry="7.4" fill="url(#shade2)" stroke="rgba(0,0,0,0.22)" stroke-width="0.6"/><rect x="2.3" y="5.9" width="25.799999999999997" height="9.299999999999999" fill="url(#cu)"/><ellipse cx="2.4" cy="10.55" rx="2.1" ry="4.449999999999999" fill="#eaa074" stroke="#c25d24" stroke-width="0.9"/></svg></div><div class="cc" style="top:779px">[G/B]</div><div class="nm" style="top:780px"><b>REM DPO6</b></div><div class="dl" style="top:802px;width:603px"></div><div class="bg" style="top:803px;height:31px;width:603px"></div><div class="pin" style="top:811px">A33</div><div class="wi" style="top:807px"><svg class="w" width="72" height="22" viewBox="0 0 72 22"><path d="M26.9,3.0 L67.2,3.0 C69.1,3.0 70.0,6.0 70.0,10.4 C70.0,14.8 69.1,17.8 67.2,17.8 L26.9,17.8 Z" fill="#108c10"/><path d="M40.8,17.8 C42.3,17.8 45.4,3.0 46.9,3.0 L56.8,3.0 C55.3,3.0 52.2,17.8 50.7,17.8 Z" fill="#9c5c1c"/><path d="M26.9,3.0 L67.2,3.0 C69.1,3.0 70.0,6.0 70.0,10.4 C70.0,14.8 69.1,17.8 67.2,17.8 L26.9,17.8 Z" fill="url(#shade)"/><ellipse cx="26.9" cy="10.4" rx="2.4" ry="7.4" fill="#108c10"/><ellipse cx="26.9" cy="10.4" rx="2.4" ry="7.4" fill="url(#shade2)" stroke="rgba(0,0,0,0.22)" stroke-width="0.6"/><rect x="2.3" y="5.9" width="25.799999999999997" height="9.299999999999999" fill="url(#cu)"/><ellipse cx="2.4" cy="10.55" rx="2.1" ry="4.449999999999999" fill="#eaa074" stroke="#c25d24" stroke-width="0.9"/></svg></div><div class="cc" style="top:811px">[G/BR]</div><div class="nm" style="top:812px"><b>REM DPO7</b></div><div class="dl" style="top:834px;width:603px"></div><div class="pin" style="top:843px">A34</div><div class="wi" style="top:839px"><svg class="w" width="72" height="22" viewBox="0 0 72 22"><path d="M26.9,3.0 L67.2,3.0 C69.1,3.0 70.0,6.0 70.0,10.4 C70.0,14.8 69.1,17.8 67.2,17.8 L26.9,17.8 Z" fill="#108c10"/><path d="M40.8,17.8 C42.3,17.8 45.4,3.0 46.9,3.0 L56.8,3.0 C55.3,3.0 52.2,17.8 50.7,17.8 Z" fill="#e00000"/><path d="M26.9,3.0 L67.2,3.0 C69.1,3.0 70.0,6.0 70.0,10.4 C70.0,14.8 69.1,17.8 67.2,17.8 L26.9,17.8 Z" fill="url(#shade)"/><ellipse cx="26.9" cy="10.4" rx="2.4" ry="7.4" fill="#108c10"/><ellipse cx="26.9" cy="10.4" rx="2.4" ry="7.4" fill="url(#shade2)" stroke="rgba(0,0,0,0.22)" stroke-width="0.6"/><rect x="2.3" y="5.9" width="25.799999999999997" height="9.299999999999999" fill="url(#cu)"/><ellipse cx="2.4" cy="10.55" rx="2.1" ry="4.449999999999999" fill="#eaa074" stroke="#c25d24" stroke-width="0.9"/></svg></div><div class="cc" style="top:843px">[G/R]</div><div class="nm" style="top:844px"><b>REM DPO8</b></div><div class="dl" style="top:866px;width:603px"></div><div class="sec" style="top:879px">Slave Injector Drive RX</div><div class="dl" style="top:898px;width:603px"></div><div class="bg" style="top:899px;height:31px;width:603px"></div><div class="pin" style="top:907px">B2</div><div class="wi" style="top:903px"><svg class="w" width="72" height="22" viewBox="0 0 72 22"><path d="M26.9,3.0 L67.2,3.0 C69.1,3.0 70.0,6.0 70.0,10.4 C70.0,14.8 69.1,17.8 67.2,17.8 L26.9,17.8 Z" fill="#9300cf"/><path d="M40.8,17.8 C42.3,17.8 45.4,3.0 46.9,3.0 L56.8,3.0 C55.3,3.0 52.2,17.8 50.7,17.8 Z" fill="#e00000"/><path d="M26.9,3.0 L67.2,3.0 C69.1,3.0 70.0,6.0 70.0,10.4 C70.0,14.8 69.1,17.8 67.2,17.8 L26.9,17.8 Z" fill="url(#shade)"/><ellipse cx="26.9" cy="10.4" rx="2.4" ry="7.4" fill="#9300cf"/><ellipse cx="26.9" cy="10.4" rx="2.4" ry="7.4" fill="url(#shade2)" stroke="rgba(0,0,0,0.22)" stroke-width="0.6"/><rect x="2.3" y="5.9" width="25.799999999999997" height="9.299999999999999" fill="url(#cu)"/><ellipse cx="2.4" cy="10.55" rx="2.1" ry="4.449999999999999" fill="#eaa074" stroke="#c25d24" stroke-width="0.9"/></svg></div><div class="cc" style="top:907px">[V/R]</div><div class="nm" style="top:908px"><b>REM INJDRV RX2</b></div><div class="dl" style="top:930px;width:603px"></div><div class="pin" style="top:939px">B8</div><div class="wi" style="top:935px"><svg class="w" width="72" height="22" viewBox="0 0 72 22"><path d="M26.9,3.0 L67.2,3.0 C69.1,3.0 70.0,6.0 70.0,10.4 C70.0,14.8 69.1,17.8 67.2,17.8 L26.9,17.8 Z" fill="#9300cf"/><path d="M40.8,17.8 C42.3,17.8 45.4,3.0 46.9,3.0 L56.8,3.0 C55.3,3.0 52.2,17.8 50.7,17.8 Z" fill="#ec9e00"/><path d="M26.9,3.0 L67.2,3.0 C69.1,3.0 70.0,6.0 70.0,10.4 C70.0,14.8 69.1,17.8 67.2,17.8 L26.9,17.8 Z" fill="url(#shade)"/><ellipse cx="26.9" cy="10.4" rx="2.4" ry="7.4" fill="#9300cf"/><ellipse cx="26.9" cy="10.4" rx="2.4" ry="7.4" fill="url(#shade2)" stroke="rgba(0,0,0,0.22)" stroke-width="0.6"/><rect x="2.3" y="5.9" width="25.799999999999997" height="9.299999999999999" fill="url(#cu)"/><ellipse cx="2.4" cy="10.55" rx="2.1" ry="4.449999999999999" fill="#eaa074" stroke="#c25d24" stroke-width="0.9"/></svg></div><div class="cc" style="top:939px">[V/O]</div><div class="nm" style="top:940px"><b>REM INJDRV RX3</b></div><div class="dl" style="top:962px;width:603px"></div></div>
<div class="sb" style="left:604px"><div class="thumb" style="top:562px;height:383px"></div>
<svg class="abs" style="left:4px;top:6px" width="8" height="7" viewBox="0 0 8 7"><polygon points="0,3.6 3.5,0 7,3.6 7,6.1 3.5,2.5 0,6.1" fill="#606060"/></svg>
<svg class="abs" style="left:4px;top:951px" width="8" height="7" viewBox="0 0 8 7"><polygon points="0,0.5 3.5,4 7,0.5 7,3 3.5,6.5 0,3" fill="#606060"/></svg>
</div>
</div>
<div class="panel" style="left:648px;width:1193px">
<div class="content"><div class="pin" style="top:-10px">A28</div><div class="wi" style="top:-14px"><svg class="w" width="72" height="22" viewBox="0 0 72 22"><path d="M26.9,3.0 L67.2,3.0 C69.1,3.0 70.0,6.0 70.0,10.4 C70.0,14.8 69.1,17.8 67.2,17.8 L26.9,17.8 Z" fill="#0073e6"/><path d="M40.8,17.8 C42.3,17.8 45.4,3.0 46.9,3.0 L56.8,3.0 C55.3,3.0 52.2,17.8 50.7,17.8 Z" fill="#fbfb00"/><path d="M26.9,3.0 L67.2,3.0 C69.1,3.0 70.0,6.0 70.0,10.4 C70.0,14.8 69.1,17.8 67.2,17.8 L26.9,17.8 Z" fill="url(#shade)"/><ellipse cx="26.9" cy="10.4" rx="2.4" ry="7.4" fill="#0073e6"/><ellipse cx="26.9" cy="10.4" rx="2.4" ry="7.4" fill="url(#shade2)" stroke="rgba(0,0,0,0.22)" stroke-width="0.6"/><rect x="2.3" y="5.9" width="25.799999999999997" height="9.299999999999999" fill="url(#cu)"/><ellipse cx="2.4" cy="10.55" rx="2.1" ry="4.449999999999999" fill="#eaa074" stroke="#c25d24" stroke-width="0.9"/></svg></div><div class="cc" style="top:-10px">[L/Y]</div><div class="nm" style="top:-9px"><b>INJ6</b><svg class="ar" width="12" height="5" viewBox="0 0 12 5"><path d="M0,2.5 H11.2 M8,0.3 L11.3,2.5 L8,4.7" stroke="#000" stroke-width="1" fill="none"/></svg>Stage 1 - Injection Output 6</div><div class="dl" style="top:13px;width:1174px"></div><div class="bg" style="top:14px;height:31px;width:1174px"></div><div class="pin" style="top:22px">A29</div><div class="wi" style="top:18px"><svg class="w" width="72" height="22" viewBox="0 0 72 22"><path d="M26.9,3.0 L67.2,3.0 C69.1,3.0 70.0,6.0 70.0,10.4 C70.0,14.8 69.1,17.8 67.2,17.8 L26.9,17.8 Z" fill="#0073e6"/><path d="M40.8,17.8 C42.3,17.8 45.4,3.0 46.9,3.0 L56.8,3.0 C55.3,3.0 52.2,17.8 50.7,17.8 Z" fill="#108c10"/><path d="M26.9,3.0 L67.2,3.0 C69.1,3.0 70.0,6.0 70.0,10.4 C70.0,14.8 69.1,17.8 67.2,17.8 L26.9,17.8 Z" fill="url(#shade)"/><ellipse cx="26.9" cy="10.4" rx="2.4" ry="7.4" fill="#0073e6"/><ellipse cx="26.9" cy="10.4" rx="2.4" ry="7.4" fill="url(#shade2)" stroke="rgba(0,0,0,0.22)" stroke-width="0.6"/><rect x="2.3" y="5.9" width="25.799999999999997" height="9.299999999999999" fill="url(#cu)"/><ellipse cx="2.4" cy="10.55" rx="2.1" ry="4.449999999999999" fill="#eaa074" stroke="#c25d24" stroke-width="0.9"/></svg></div><div class="cc" style="top:22px">[L/G]</div><div class="nm" style="top:23px"><b>INJ7</b><svg class="ar" width="12" height="5" viewBox="0 0 12 5"><path d="M0,2.5 H11.2 M8,0.3 L11.3,2.5 L8,4.7" stroke="#000" stroke-width="1" fill="none"/></svg>Stage 1 - Injection Output 7</div><div class="dl" style="top:45px;width:1174px"></div><div class="pin" style="top:54px">A30</div><div class="wi" style="top:50px"><svg class="w" width="72" height="22" viewBox="0 0 72 22"><path d="M26.9,3.0 L67.2,3.0 C69.1,3.0 70.0,6.0 70.0,10.4 C70.0,14.8 69.1,17.8 67.2,17.8 L26.9,17.8 Z" fill="#0073e6"/><path d="M40.8,17.8 C42.3,17.8 45.4,3.0 46.9,3.0 L56.8,3.0 C55.3,3.0 52.2,17.8 50.7,17.8 Z" fill="#9300cf"/><path d="M26.9,3.0 L67.2,3.0 C69.1,3.0 70.0,6.0 70.0,10.4 C70.0,14.8 69.1,17.8 67.2,17.8 L26.9,17.8 Z" fill="url(#shade)"/><ellipse cx="26.9" cy="10.4" rx="2.4" ry="7.4" fill="#0073e6"/><ellipse cx="26.9" cy="10.4" rx="2.4" ry="7.4" fill="url(#shade2)" stroke="rgba(0,0,0,0.22)" stroke-width="0.6"/><rect x="2.3" y="5.9" width="25.799999999999997" height="9.299999999999999" fill="url(#cu)"/><ellipse cx="2.4" cy="10.55" rx="2.1" ry="4.449999999999999" fill="#eaa074" stroke="#c25d24" stroke-width="0.9"/></svg></div><div class="cc" style="top:54px">[L/V]</div><div class="nm" style="top:55px"><b>INJ8</b><svg class="ar" width="12" height="5" viewBox="0 0 12 5"><path d="M0,2.5 H11.2 M8,0.3 L11.3,2.5 L8,4.7" stroke="#000" stroke-width="1" fill="none"/></svg>Stage 1 - Injection Output 8</div><div class="dl" style="top:77px;width:1174px"></div><div class="sec" style="top:90px">Pressure Inputs</div><div class="dl" style="top:109px;width:1174px"></div><div class="bg" style="top:110px;height:75px;width:1174px"></div><div style="position:absolute;left:25px;top:110px"><svg width="100" height="75" viewBox="0 0 100 75">
<defs>
<linearGradient id="sg" x1="0" y1="0" x2="0.3" y2="1"><stop offset="0" stop-color="#f2f2f2"/><stop offset="0.5" stop-color="#ebebeb"/><stop offset="1" stop-color="#b0b0b0"/></linearGradient>
<linearGradient id="tg" x1="0" y1="0" x2="0" y2="1"><stop offset="0" stop-color="#f0f0f0"/><stop offset="0.45" stop-color="#ececec"/><stop offset="1" stop-color="#a8a8a8"/></linearGradient>
<radialGradient id="hg" cx="0.35" cy="0.3" r="0.8"><stop offset="0" stop-color="#9a9a9a"/><stop offset="0.5" stop-color="#444"/><stop offset="1" stop-color="#777"/></radialGradient>
</defs>
<g stroke="#5a5a5a" stroke-width="0.6">
<ellipse cx="66.5" cy="37" rx="22.5" ry="35" transform="rotate(-22 66.5 37)" fill="url(#sg)"/>
<ellipse cx="63" cy="36.5" rx="20" ry="33" transform="rotate(-22 63 36.5)" fill="url(#sg)"/>
<ellipse cx="68.5" cy="20.5" rx="1.9" ry="2.8" transform="rotate(-20 68.5 20.5)" fill="#e6e6e6"/>
<ellipse cx="53.8" cy="55" rx="1.9" ry="2.8" transform="rotate(-20 53.8 55)" fill="#e6e6e6"/>
<path d="M28,35 L45,30.5 Q52,28 54.5,25 M35,60 L46,55 Q52,52 60,50" fill="none"/>
<path d="M28,35 L45,30.5 Q57,28 60,38 Q61,47 60,50 L46,55 L35,60 Z" fill="url(#tg)" stroke="none"/>
<path d="M29,34.5 Q52,28 55,25" fill="none"/>
<path d="M21.5,34 L29,33.5 Q35,45 35,61 L23,62.5 Z" fill="url(#tg)"/>
<path d="M14.5,38.5 L22,34.5 Q27,46 27,62 L15,63 Z" fill="url(#tg)"/>
<ellipse cx="10.3" cy="51" rx="5.3" ry="11.8" fill="#ededed"/>
<ellipse cx="10.3" cy="51" rx="4.2" ry="9.6" fill="#ededed"/>
<ellipse cx="10.3" cy="51.5" rx="3.1" ry="6.6" fill="url(#hg)"/>
</g></svg></div><div class="nm" style="top:141px"><b>OBPS1</b><svg class="ar" width="12" height="5" viewBox="0 0 12 5"><path d="M0,2.5 H11.2 M8,0.3 L11.3,2.5 L8,4.7" stroke="#000" stroke-width="1" fill="none"/></svg>Manifold Pressure Sensor</div><div class="dl" style="top:185px;width:1174px"></div><div class="sec" style="top:198px">System References</div><div class="dl" style="top:217px;width:1174px"></div><div class="bg" style="top:218px;height:31px;width:1174px"></div><div class="pin" style="top:226px">A9</div><div class="wi" style="top:222px"><svg class="w" width="72" height="22" viewBox="0 0 72 22"><path d="M27.4,3.0 L65.7,3.0 C67.6,3.0 68.5,6.0 68.5,10.4 C68.5,14.8 67.6,17.8 65.7,17.8 L27.4,17.8 Z" fill="#ec9e00"/><path d="M27.4,3.0 L65.7,3.0 C67.6,3.0 68.5,6.0 68.5,10.4 C68.5,14.8 67.6,17.8 65.7,17.8 L27.4,17.8 Z" fill="url(#shade)"/><ellipse cx="27.4" cy="10.4" rx="2.4" ry="7.4" fill="#ec9e00"/><ellipse cx="27.4" cy="10.4" rx="2.4" ry="7.4" fill="url(#shade2)" stroke="rgba(0,0,0,0.22)" stroke-width="0.6"/><rect x="3.3" y="5.9" width="25.299999999999997" height="9.299999999999999" fill="url(#cu)"/><ellipse cx="3.4" cy="10.55" rx="2.1" ry="4.449999999999999" fill="#eaa074" stroke="#c25d24" stroke-width="0.9"/></svg></div><div class="cc" style="top:226px">[O]</div><div class="nm" style="top:227px"><b>+5V DC</b><svg class="ar" width="12" height="5" viewBox="0 0 12 5"><path d="M0,2.5 H11.2 M8,0.3 L11.3,2.5 L8,4.7" stroke="#000" stroke-width="1" fill="none"/></svg>5V Sensors</div><div class="dl" style="top:249px;width:1174px"></div><div class="pin" style="top:258px">A12</div><div class="wi" style="top:254px"><svg class="w" width="72" height="22" viewBox="0 0 72 22"><path d="M26.9,3.0 L67.2,3.0 C69.1,3.0 70.0,6.0 70.0,10.4 C70.0,14.8 69.1,17.8 67.2,17.8 L26.9,17.8 Z" fill="#ec9e00"/><path d="M40.8,17.8 C42.3,17.8 45.4,3.0 46.9,3.0 L56.8,3.0 C55.3,3.0 52.2,17.8 50.7,17.8 Z" fill="#e6e6e6"/><path d="M26.9,3.0 L67.2,3.0 C69.1,3.0 70.0,6.0 70.0,10.4 C70.0,14.8 69.1,17.8 67.2,17.8 L26.9,17.8 Z" fill="url(#shade)"/><ellipse cx="26.9" cy="10.4" rx="2.4" ry="7.4" fill="#ec9e00"/><ellipse cx="26.9" cy="10.4" rx="2.4" ry="7.4" fill="url(#shade2)" stroke="rgba(0,0,0,0.22)" stroke-width="0.6"/><rect x="2.3" y="5.9" width="25.799999999999997" height="9.299999999999999" fill="url(#cu)"/><ellipse cx="2.4" cy="10.55" rx="2.1" ry="4.449999999999999" fill="#eaa074" stroke="#c25d24" stroke-width="0.9"/></svg></div><div class="cc" style="top:258px">[O/W]</div><div class="nm" style="top:259px"><b>+8V DC</b><svg class="ar" width="12" height="5" viewBox="0 0 12 5"><path d="M0,2.5 H11.2 M8,0.3 L11.3,2.5 L8,4.7" stroke="#000" stroke-width="1" fill="none"/></svg>8V Sensors</div><div class="dl" style="top:281px;width:1174px"></div><div class="bg" style="top:282px;height:31px;width:1174px"></div><div class="pin" style="top:290px">A13</div><div class="wi" style="top:286px"><svg class="w" width="72" height="22" viewBox="0 0 72 22"><path d="M27.4,3.0 L65.7,3.0 C67.6,3.0 68.5,6.0 68.5,10.4 C68.5,14.8 67.6,17.8 65.7,17.8 L27.4,17.8 Z" fill="#e87a80"/><path d="M27.4,3.0 L65.7,3.0 C67.6,3.0 68.5,6.0 68.5,10.4 C68.5,14.8 67.6,17.8 65.7,17.8 L27.4,17.8 Z" fill="url(#shade)"/><ellipse cx="27.4" cy="10.4" rx="2.4" ry="7.4" fill="#e87a80"/><ellipse cx="27.4" cy="10.4" rx="2.4" ry="7.4" fill="url(#shade2)" stroke="rgba(0,0,0,0.22)" stroke-width="0.6"/><rect x="3.3" y="5.9" width="25.299999999999997" height="9.299999999999999" fill="url(#cu)"/><ellipse cx="3.4" cy="10.55" rx="2.1" ry="4.449999999999999" fill="#eaa074" stroke="#c25d24" stroke-width="0.9"/></svg></div><div class="cc" style="top:290px">[P]</div><div class="nm" style="top:291px"><b>+12V IGN IN</b><svg class="ar" width="12" height="5" viewBox="0 0 12 5"><path d="M0,2.5 H11.2 M8,0.3 L11.3,2.5 L8,4.7" stroke="#000" stroke-width="1" fill="none"/></svg>Ignition Switch</div><div class="dl" style="top:313px;width:1174px"></div><div class="pin" style="top:322px">B11</div><div class="wi" style="top:318px"><svg class="w" width="72" height="22" viewBox="0 0 72 22"><path d="M26.9,3.0 L67.2,3.0 C69.1,3.0 70.0,6.0 70.0,10.4 C70.0,14.8 69.1,17.8 67.2,17.8 L26.9,17.8 Z" fill="#e00000"/><path d="M40.8,17.8 C42.3,17.8 45.4,3.0 46.9,3.0 L56.8,3.0 C55.3,3.0 52.2,17.8 50.7,17.8 Z" fill="#e6e6e6"/><path d="M26.9,3.0 L67.2,3.0 C69.1,3.0 70.0,6.0 70.0,10.4 C70.0,14.8 69.1,17.8 67.2,17.8 L26.9,17.8 Z" fill="url(#shade)"/><ellipse cx="26.9" cy="10.4" rx="2.4" ry="7.4" fill="#e00000"/><ellipse cx="26.9" cy="10.4" rx="2.4" ry="7.4" fill="url(#shade2)" stroke="rgba(0,0,0,0.22)" stroke-width="0.6"/><rect x="2.3" y="5.9" width="25.799999999999997" height="9.299999999999999" fill="url(#cu)"/><ellipse cx="2.4" cy="10.55" rx="2.1" ry="4.449999999999999" fill="#eaa074" stroke="#c25d24" stroke-width="0.9"/></svg></div><div class="cc" style="top:322px">[R/W]</div><div class="nm" style="top:323px"><b>+13.8V ECU PWR</b><svg class="ar" width="12" height="5" viewBox="0 0 12 5"><path d="M0,2.5 H11.2 M8,0.3 L11.3,2.5 L8,4.7" stroke="#000" stroke-width="1" fill="none"/></svg>10A Fused Power</div><div class="dl" style="top:345px;width:1174px"></div><div class="bg" style="top:346px;height:31px;width:1174px"></div><div class="pin" style="top:354px">A26</div><div class="wi" style="top:350px"><svg class="w" width="72" height="22" viewBox="0 0 72 22"><path d="M26.9,3.0 L67.2,3.0 C69.1,3.0 70.0,6.0 70.0,10.4 C70.0,14.8 69.1,17.8 67.2,17.8 L26.9,17.8 Z" fill="#e00000"/><path d="M40.8,17.8 C42.3,17.8 45.4,3.0 46.9,3.0 L56.8,3.0 C55.3,3.0 52.2,17.8 50.7,17.8 Z" fill="#0073e6"/><path d="M26.9,3.0 L67.2,3.0 C69.1,3.0 70.0,6.0 70.0,10.4 C70.0,14.8 69.1,17.8 67.2,17.8 L26.9,17.8 Z" fill="url(#shade)"/><ellipse cx="26.9" cy="10.4" rx="2.4" ry="7.4" fill="#e00000"/><ellipse cx="26.9" cy="10.4" rx="2.4" ry="7.4" fill="url(#shade2)" stroke="rgba(0,0,0,0.22)" stroke-width="0.6"/><rect x="2.3" y="5.9" width="25.799999999999997" height="9.299999999999999" fill="url(#cu)"/><ellipse cx="2.4" cy="10.55" rx="2.1" ry="4.449999999999999" fill="#eaa074" stroke="#c25d24" stroke-width="0.9"/></svg></div><div class="cc" style="top:354px">[R/L]</div><div class="nm" style="top:355px"><b>+13.8V INJ PWR</b><svg class="ar" width="12" height="5" viewBox="0 0 12 5"><path d="M0,2.5 H11.2 M8,0.3 L11.3,2.5 L8,4.7" stroke="#000" stroke-width="1" fill="none"/></svg>20A Fused Power</div><div class="dl" style="top:377px;width:1174px"></div><div class="pin" style="top:386px">A10</div><div class="wi" style="top:382px"><svg class="w" width="72" height="22" viewBox="0 0 72 22"><path d="M27.4,3.0 L65.7,3.0 C67.6,3.0 68.5,6.0 68.5,10.4 C68.5,14.8 67.6,17.8 65.7,17.8 L27.4,17.8 Z" fill="#353535"/><path d="M27.4,3.0 L65.7,3.0 C67.6,3.0 68.5,6.0 68.5,10.4 C68.5,14.8 67.6,17.8 65.7,17.8 L27.4,17.8 Z" fill="url(#shade)"/><ellipse cx="27.4" cy="10.4" rx="2.4" ry="7.4" fill="#353535"/><ellipse cx="27.4" cy="10.4" rx="2.4" ry="7.4" fill="url(#shade2)" stroke="rgba(0,0,0,0.22)" stroke-width="0.6"/><rect x="3.3" y="5.9" width="25.299999999999997" height="9.299999999999999" fill="url(#cu)"/><ellipse cx="3.4" cy="10.55" rx="2.1" ry="4.449999999999999" fill="#eaa074" stroke="#c25d24" stroke-width="0.9"/></svg></div><div class="cc" style="top:386px">[B]</div><div class="pin" style="top:412px">A11</div><div class="wi" style="top:408px"><svg class="w" width="72" height="22" viewBox="0 0 72 22"><path d="M27.4,3.0 L65.7,3.0 C67.6,3.0 68.5,6.0 68.5,10.4 C68.5,14.8 67.6,17.8 65.7,17.8 L27.4,17.8 Z" fill="#353535"/><path d="M27.4,3.0 L65.7,3.0 C67.6,3.0 68.5,6.0 68.5,10.4 C68.5,14.8 67.6,17.8 65.7,17.8 L27.4,17.8 Z" fill="url(#shade)"/><ellipse cx="27.4" cy="10.4" rx="2.4" ry="7.4" fill="#353535"/><ellipse cx="27.4" cy="10.4" rx="2.4" ry="7.4" fill="url(#shade2)" stroke="rgba(0,0,0,0.22)" stroke-width="0.6"/><rect x="3.3" y="5.9" width="25.299999999999997" height="9.299999999999999" fill="url(#cu)"/><ellipse cx="3.4" cy="10.55" rx="2.1" ry="4.449999999999999" fill="#eaa074" stroke="#c25d24" stroke-width="0.9"/></svg></div><div class="cc" style="top:412px">[B]</div><div class="brk" style="top:382px;height:48px"></div><div class="nm" style="top:400px"><b>BATTERY GND</b><svg class="ar" width="12" height="5" viewBox="0 0 12 5"><path d="M0,2.5 H11.2 M8,0.3 L11.3,2.5 L8,4.7" stroke="#000" stroke-width="1" fill="none"/></svg>Battery (-ve)</div><div class="dl" style="top:435px;width:1174px"></div><div class="bg" style="top:436px;height:31px;width:1174px"></div><div class="pin" style="top:444px">B2</div><div class="wi" style="top:440px"><svg class="w" width="72" height="22" viewBox="0 0 72 22"><rect x="2.3" y="5.9" width="15.7" height="9.299999999999999" fill="url(#cu)"/><ellipse cx="2.4" cy="10.55" rx="2.1" ry="4.449999999999999" fill="#eaa074" stroke="#c25d24" stroke-width="0.9"/><path d="M17.0,4.2 L28.599999999999998,4.2 L28.599999999999998,16.9 L17.0,16.9 Q14.4,10.549999999999999 17.0,4.2 Z" fill="#a2a2a2"/><rect x="18.0" y="5.800000000000001" width="1.9" height="1.6" fill="#e2a078"/><rect x="22.0" y="5.4" width="1.9" height="1.6" fill="#e2a078"/><rect x="25.2" y="6.0" width="1.9" height="1.6" fill="#e2a078"/><rect x="17.2" y="9.0" width="1.9" height="1.6" fill="#e2a078"/><rect x="20.8" y="8.600000000000001" width="1.9" height="1.6" fill="#e2a078"/><rect x="24.4" y="9.4" width="1.9" height="1.6" fill="#e2a078"/><rect x="18.4" y="12.0" width="1.9" height="1.6" fill="#e2a078"/><rect x="22.2" y="11.8" width="1.9" height="1.6" fill="#e2a078"/><rect x="25.4" y="12.600000000000001" width="1.9" height="1.6" fill="#e2a078"/><rect x="19.6" y="14.600000000000001" width="1.9" height="1.6" fill="#e2a078"/><path d="M16.0,5.2 L28.599999999999998,16.9 M20.0,4.2 L28.599999999999998,12.2 M15.0,10.2 L21.0,16.9 M16.0,15.899999999999999 L28.599999999999998,4.2 M20.0,16.9 L28.599999999999998,8.899999999999999 M15.0,10.899999999999999 L21.0,4.2" stroke="#505050" stroke-width="0.5"/><path d="M17.0,4.2 L28.599999999999998,4.2 L28.599999999999998,16.9 L17.0,16.9 Q14.4,10.549999999999999 17.0,4.2 Z" fill="url(#shade)"/><ellipse cx="19.5" cy="15.3" rx="1.5" ry="0.8" fill="#f2f2f2"/><path d="M28.599999999999998,3.0 L67.0,3.0 C68.89999999999999,3.0 69.8,6.0 69.8,10.4 C69.8,14.8 68.89999999999999,17.8 67.0,17.8 L28.599999999999998,17.8 Z" fill="#fbfb00"/><path d="M28.599999999999998,3.0 L67.0,3.0 C68.89999999999999,3.0 69.8,6.0 69.8,10.4 C69.8,14.8 68.89999999999999,17.8 67.0,17.8 L28.599999999999998,17.8 Z" fill="url(#shade)"/><ellipse cx="28.599999999999998" cy="10.4" rx="2.4" ry="7.4" fill="#fbfb00"/><ellipse cx="28.599999999999998" cy="10.4" rx="2.4" ry="7.4" fill="url(#shade2)" stroke="rgba(0,0,0,0.22)" stroke-width="0.6"/></svg></div><div class="cc" style="top:444px">[Y]</div><div class="nm" style="top:445px"><b>HOME (+ve)</b><svg class="ar" width="12" height="5" viewBox="0 0 12 5"><path d="M0,2.5 H11.2 M8,0.3 L11.3,2.5 L8,4.7" stroke="#000" stroke-width="1" fill="none"/></svg>Home System (+)</div><div class="dl" style="top:467px;width:1174px"></div><div class="pin" style="top:476px">B14</div><div class="wi" style="top:472px"><svg class="w" width="72" height="22" viewBox="0 0 72 22"><path d="M26.9,3.0 L67.2,3.0 C69.1,3.0 70.0,6.0 70.0,10.4 C70.0,14.8 69.1,17.8 67.2,17.8 L26.9,17.8 Z" fill="#353535"/><path d="M40.8,17.8 C42.3,17.8 45.4,3.0 46.9,3.0 L56.8,3.0 C55.3,3.0 52.2,17.8 50.7,17.8 Z" fill="#e6e6e6"/><path d="M26.9,3.0 L67.2,3.0 C69.1,3.0 70.0,6.0 70.0,10.4 C70.0,14.8 69.1,17.8 67.2,17.8 L26.9,17.8 Z" fill="url(#shade)"/><ellipse cx="26.9" cy="10.4" rx="2.4" ry="7.4" fill="#353535"/><ellipse cx="26.9" cy="10.4" rx="2.4" ry="7.4" fill="url(#shade2)" stroke="rgba(0,0,0,0.22)" stroke-width="0.6"/><rect x="2.3" y="5.9" width="25.799999999999997" height="9.299999999999999" fill="url(#cu)"/><ellipse cx="2.4" cy="10.55" rx="2.1" ry="4.449999999999999" fill="#eaa074" stroke="#c25d24" stroke-width="0.9"/></svg></div><div class="cc" style="top:476px">[B/W]</div><div class="pin" style="top:502px">B15</div><div class="wi" style="top:498px"><svg class="w" width="72" height="22" viewBox="0 0 72 22"><path d="M26.9,3.0 L67.2,3.0 C69.1,3.0 70.0,6.0 70.0,10.4 C70.0,14.8 69.1,17.8 67.2,17.8 L26.9,17.8 Z" fill="#353535"/><path d="M40.8,17.8 C42.3,17.8 45.4,3.0 46.9,3.0 L56.8,3.0 C55.3,3.0 52.2,17.8 50.7,17.8 Z" fill="#e6e6e6"/><path d="M26.9,3.0 L67.2,3.0 C69.1,3.0 70.0,6.0 70.0,10.4 C70.0,14.8 69.1,17.8 67.2,17.8 L26.9,17.8 Z" fill="url(#shade)"/><ellipse cx="26.9" cy="10.4" rx="2.4" ry="7.4" fill="#353535"/><ellipse cx="26.9" cy="10.4" rx="2.4" ry="7.4" fill="url(#shade2)" stroke="rgba(0,0,0,0.22)" stroke-width="0.6"/><rect x="2.3" y="5.9" width="25.799999999999997" height="9.299999999999999" fill="url(#cu)"/><ellipse cx="2.4" cy="10.55" rx="2.1" ry="4.449999999999999" fill="#eaa074" stroke="#c25d24" stroke-width="0.9"/></svg></div><div class="cc" style="top:502px">[B/W]</div><div class="pin" style="top:528px">B16</div><div class="wi" style="top:524px"><svg class="w" width="72" height="22" viewBox="0 0 72 22"><path d="M26.9,3.0 L67.2,3.0 C69.1,3.0 70.0,6.0 70.0,10.4 C70.0,14.8 69.1,17.8 67.2,17.8 L26.9,17.8 Z" fill="#353535"/><path d="M40.8,17.8 C42.3,17.8 45.4,3.0 46.9,3.0 L56.8,3.0 C55.3,3.0 52.2,17.8 50.7,17.8 Z" fill="#e6e6e6"/><path d="M26.9,3.0 L67.2,3.0 C69.1,3.0 70.0,6.0 70.0,10.4 C70.0,14.8 69.1,17.8 67.2,17.8 L26.9,17.8 Z" fill="url(#shade)"/><ellipse cx="26.9" cy="10.4" rx="2.4" ry="7.4" fill="#353535"/><ellipse cx="26.9" cy="10.4" rx="2.4" ry="7.4" fill="url(#shade2)" stroke="rgba(0,0,0,0.22)" stroke-width="0.6"/><rect x="2.3" y="5.9" width="25.799999999999997" height="9.299999999999999" fill="url(#cu)"/><ellipse cx="2.4" cy="10.55" rx="2.1" ry="4.449999999999999" fill="#eaa074" stroke="#c25d24" stroke-width="0.9"/></svg></div><div class="cc" style="top:528px">[B/W]</div><div class="brk" style="top:472px;height:74px"></div><div class="nm" style="top:503px"><b>SIGNAL GND</b><svg class="ar" width="12" height="5" viewBox="0 0 12 5"><path d="M0,2.5 H11.2 M8,0.3 L11.3,2.5 L8,4.7" stroke="#000" stroke-width="1" fill="none"/></svg>0V Sensors</div><div class="dl" style="top:551px;width:1174px"></div><div class="bg" style="top:552px;height:31px;width:1174px"></div><div class="pin" style="top:560px">B1</div><div class="wi" style="top:556px"><svg class="w" width="72" height="22" viewBox="0 0 72 22"><rect x="2.3" y="5.9" width="15.7" height="9.299999999999999" fill="url(#cu)"/><ellipse cx="2.4" cy="10.55" rx="2.1" ry="4.449999999999999" fill="#eaa074" stroke="#c25d24" stroke-width="0.9"/><path d="M17.0,4.2 L28.599999999999998,4.2 L28.599999999999998,16.9 L17.0,16.9 Q14.4,10.549999999999999 17.0,4.2 Z" fill="#a2a2a2"/><rect x="18.0" y="5.800000000000001" width="1.9" height="1.6" fill="#e2a078"/><rect x="22.0" y="5.4" width="1.9" height="1.6" fill="#e2a078"/><rect x="25.2" y="6.0" width="1.9" height="1.6" fill="#e2a078"/><rect x="17.2" y="9.0" width="1.9" height="1.6" fill="#e2a078"/><rect x="20.8" y="8.600000000000001" width="1.9" height="1.6" fill="#e2a078"/><rect x="24.4" y="9.4" width="1.9" height="1.6" fill="#e2a078"/><rect x="18.4" y="12.0" width="1.9" height="1.6" fill="#e2a078"/><rect x="22.2" y="11.8" width="1.9" height="1.6" fill="#e2a078"/><rect x="25.4" y="12.600000000000001" width="1.9" height="1.6" fill="#e2a078"/><rect x="19.6" y="14.600000000000001" width="1.9" height="1.6" fill="#e2a078"/><path d="M16.0,5.2 L28.599999999999998,16.9 M20.0,4.2 L28.599999999999998,12.2 M15.0,10.2 L21.0,16.9 M16.0,15.899999999999999 L28.599999999999998,4.2 M20.0,16.9 L28.599999999999998,8.899999999999999 M15.0,10.899999999999999 L21.0,4.2" stroke="#505050" stroke-width="0.5"/><path d="M17.0,4.2 L28.599999999999998,4.2 L28.599999999999998,16.9 L17.0,16.9 Q14.4,10.549999999999999 17.0,4.2 Z" fill="url(#shade)"/><ellipse cx="19.5" cy="15.3" rx="1.5" ry="0.8" fill="#f2f2f2"/><path d="M28.599999999999998,3.0 L67.0,3.0 C68.89999999999999,3.0 69.8,6.0 69.8,10.4 C69.8,14.8 68.89999999999999,17.8 67.0,17.8 L28.599999999999998,17.8 Z" fill="#fbfb00"/><path d="M28.599999999999998,3.0 L67.0,3.0 C68.89999999999999,3.0 69.8,6.0 69.8,10.4 C69.8,14.8 68.89999999999999,17.8 67.0,17.8 L28.599999999999998,17.8 Z" fill="url(#shade)"/><ellipse cx="28.599999999999998" cy="10.4" rx="2.4" ry="7.4" fill="#fbfb00"/><ellipse cx="28.599999999999998" cy="10.4" rx="2.4" ry="7.4" fill="url(#shade2)" stroke="rgba(0,0,0,0.22)" stroke-width="0.6"/></svg></div><div class="cc" style="top:560px">[Y]</div><div class="nm" style="top:561px"><b>TRIGGER (+ve)</b><svg class="ar" width="12" height="5" viewBox="0 0 12 5"><path d="M0,2.5 H11.2 M8,0.3 L11.3,2.5 L8,4.7" stroke="#000" stroke-width="1" fill="none"/></svg>Trigger System (+)</div><div class="dl" style="top:583px;width:1174px"></div><div class="mod" style="top:596px">Race Expansion Module</div><div class="sec" style="top:623px">Slave Injector</div><div class="dl" style="top:642px;width:1174px"></div><div class="bg" style="top:643px;height:31px;width:1174px"></div><div class="pin" style="top:651px">A19</div><div class="wi" style="top:647px"><svg class="w" width="72" height="22" viewBox="0 0 72 22"><path d="M27.4,3.0 L65.7,3.0 C67.6,3.0 68.5,6.0 68.5,10.4 C68.5,14.8 67.6,17.8 65.7,17.8 L27.4,17.8 Z" fill="#0073e6"/><path d="M27.4,3.0 L65.7,3.0 C67.6,3.0 68.5,6.0 68.5,10.4 C68.5,14.8 67.6,17.8 65.7,17.8 L27.4,17.8 Z" fill="url(#shade)"/><ellipse cx="27.4" cy="10.4" rx="2.4" ry="7.4" fill="#0073e6"/><ellipse cx="27.4" cy="10.4" rx="2.4" ry="7.4" fill="url(#shade2)" stroke="rgba(0,0,0,0.22)" stroke-width="0.6"/><rect x="3.3" y="5.9" width="25.299999999999997" height="9.299999999999999" fill="url(#cu)"/><ellipse cx="3.4" cy="10.55" rx="2.1" ry="4.449999999999999" fill="#eaa074" stroke="#c25d24" stroke-width="0.9"/></svg></div><div class="cc" style="top:651px">[L]</div><div class="nm" style="top:652px"><b>REM INJ1</b><svg class="ar" width="12" height="5" viewBox="0 0 12 5"><path d="M0,2.5 H11.2 M8,0.3 L11.3,2.5 L8,4.7" stroke="#000" stroke-width="1" fill="none"/></svg>Stage 2 - Injection Output 1</div><div class="dl" style="top:674px;width:1174px"></div><div class="pin" style="top:683px">A20</div><div class="wi" style="top:679px"><svg class="w" width="72" height="22" viewBox="0 0 72 22"><path d="M26.9,3.0 L67.2,3.0 C69.1,3.0 70.0,6.0 70.0,10.4 C70.0,14.8 69.1,17.8 67.2,17.8 L26.9,17.8 Z" fill="#0073e6"/><path d="M40.8,17.8 C42.3,17.8 45.4,3.0 46.9,3.0 L56.8,3.0 C55.3,3.0 52.2,17.8 50.7,17.8 Z" fill="#353535"/><path d="M26.9,3.0 L67.2,3.0 C69.1,3.0 70.0,6.0 70.0,10.4 C70.0,14.8 69.1,17.8 67.2,17.8 L26.9,17.8 Z" fill="url(#shade)"/><ellipse cx="26.9" cy="10.4" rx="2.4" ry="7.4" fill="#0073e6"/><ellipse cx="26.9" cy="10.4" rx="2.4" ry="7.4" fill="url(#shade2)" stroke="rgba(0,0,0,0.22)" stroke-width="0.6"/><rect x="2.3" y="5.9" width="25.799999999999997" height="9.299999999999999" fill="url(#cu)"/><ellipse cx="2.4" cy="10.55" rx="2.1" ry="4.449999999999999" fill="#eaa074" stroke="#c25d24" stroke-width="0.9"/></svg></div><div class="cc" style="top:683px">[L/B]</div><div class="nm" style="top:684px"><b>REM INJ2</b><svg class="ar" width="12" height="5" viewBox="0 0 12 5"><path d="M0,2.5 H11.2 M8,0.3 L11.3,2.5 L8,4.7" stroke="#000" stroke-width="1" fill="none"/></svg>Stage 2 - Injection Output 2</div><div class="dl" style="top:706px;width:1174px"></div><div class="bg" style="top:707px;height:31px;width:1174px"></div><div class="pin" style="top:715px">A21</div><div class="wi" style="top:711px"><svg class="w" width="72" height="22" viewBox="0 0 72 22"><path d="M26.9,3.0 L67.2,3.0 C69.1,3.0 70.0,6.0 70.0,10.4 C70.0,14.8 69.1,17.8 67.2,17.8 L26.9,17.8 Z" fill="#0073e6"/><path d="M40.8,17.8 C42.3,17.8 45.4,3.0 46.9,3.0 L56.8,3.0 C55.3,3.0 52.2,17.8 50.7,17.8 Z" fill="#9c5c1c"/><path d="M26.9,3.0 L67.2,3.0 C69.1,3.0 70.0,6.0 70.0,10.4 C70.0,14.8 69.1,17.8 67.2,17.8 L26.9,17.8 Z" fill="url(#shade)"/><ellipse cx="26.9" cy="10.4" rx="2.4" ry="7.4" fill="#0073e6"/><ellipse cx="26.9" cy="10.4" rx="2.4" ry="7.4" fill="url(#shade2)" stroke="rgba(0,0,0,0.22)" stroke-width="0.6"/><rect x="2.3" y="5.9" width="25.799999999999997" height="9.299999999999999" fill="url(#cu)"/><ellipse cx="2.4" cy="10.55" rx="2.1" ry="4.449999999999999" fill="#eaa074" stroke="#c25d24" stroke-width="0.9"/></svg></div><div class="cc" style="top:715px">[L/BR]</div><div class="nm" style="top:716px"><b>REM INJ3</b><svg class="ar" width="12" height="5" viewBox="0 0 12 5"><path d="M0,2.5 H11.2 M8,0.3 L11.3,2.5 L8,4.7" stroke="#000" stroke-width="1" fill="none"/></svg>Stage 2 - Injection Output 3</div><div class="dl" style="top:738px;width:1174px"></div><div class="pin" style="top:747px">A22</div><div class="wi" style="top:743px"><svg class="w" width="72" height="22" viewBox="0 0 72 22"><path d="M26.9,3.0 L67.2,3.0 C69.1,3.0 70.0,6.0 70.0,10.4 C70.0,14.8 69.1,17.8 67.2,17.8 L26.9,17.8 Z" fill="#0073e6"/><path d="M40.8,17.8 C42.3,17.8 45.4,3.0 46.9,3.0 L56.8,3.0 C55.3,3.0 52.2,17.8 50.7,17.8 Z" fill="#e00000"/><path d="M26.9,3.0 L67.2,3.0 C69.1,3.0 70.0,6.0 70.0,10.4 C70.0,14.8 69.1,17.8 67.2,17.8 L26.9,17.8 Z" fill="url(#shade)"/><ellipse cx="26.9" cy="10.4" rx="2.4" ry="7.4" fill="#0073e6"/><ellipse cx="26.9" cy="10.4" rx="2.4" ry="7.4" fill="url(#shade2)" stroke="rgba(0,0,0,0.22)" stroke-width="0.6"/><rect x="2.3" y="5.9" width="25.799999999999997" height="9.299999999999999" fill="url(#cu)"/><ellipse cx="2.4" cy="10.55" rx="2.1" ry="4.449999999999999" fill="#eaa074" stroke="#c25d24" stroke-width="0.9"/></svg></div><div class="cc" style="top:747px">[L/R]</div><div class="nm" style="top:748px"><b>REM INJ4</b><svg class="ar" width="12" height="5" viewBox="0 0 12 5"><path d="M0,2.5 H11.2 M8,0.3 L11.3,2.5 L8,4.7" stroke="#000" stroke-width="1" fill="none"/></svg>Stage 2 - Injection Output 4</div><div class="dl" style="top:770px;width:1174px"></div><div class="bg" style="top:771px;height:31px;width:1174px"></div><div class="pin" style="top:779px">A27</div><div class="wi" style="top:775px"><svg class="w" width="72" height="22" viewBox="0 0 72 22"><path d="M26.9,3.0 L67.2,3.0 C69.1,3.0 70.0,6.0 70.0,10.4 C70.0,14.8 69.1,17.8 67.2,17.8 L26.9,17.8 Z" fill="#0073e6"/><path d="M40.8,17.8 C42.3,17.8 45.4,3.0 46.9,3.0 L56.8,3.0 C55.3,3.0 52.2,17.8 50.7,17.8 Z" fill="#ec9e00"/><path d="M26.9,3.0 L67.2,3.0 C69.1,3.0 70.0,6.0 70.0,10.4 C70.0,14.8 69.1,17.8 67.2,17.8 L26.9,17.8 Z" fill="url(#shade)"/><ellipse cx="26.9" cy="10.4" rx="2.4" ry="7.4" fill="#0073e6"/><ellipse cx="26.9" cy="10.4" rx="2.4" ry="7.4" fill="url(#shade2)" stroke="rgba(0,0,0,0.22)" stroke-width="0.6"/><rect x="2.3" y="5.9" width="25.799999999999997" height="9.299999999999999" fill="url(#cu)"/><ellipse cx="2.4" cy="10.55" rx="2.1" ry="4.449999999999999" fill="#eaa074" stroke="#c25d24" stroke-width="0.9"/></svg></div><div class="cc" style="top:779px">[L/O]</div><div class="nm" style="top:780px"><b>REM INJ5</b><svg class="ar" width="12" height="5" viewBox="0 0 12 5"><path d="M0,2.5 H11.2 M8,0.3 L11.3,2.5 L8,4.7" stroke="#000" stroke-width="1" fill="none"/></svg>Stage 2 - Injection Output 5</div><div class="dl" style="top:802px;width:1174px"></div><div class="pin" style="top:811px">A28</div><div class="wi" style="top:807px"><svg class="w" width="72" height="22" viewBox="0 0 72 22"><path d="M26.9,3.0 L67.2,3.0 C69.1,3.0 70.0,6.0 70.0,10.4 C70.0,14.8 69.1,17.8 67.2,17.8 L26.9,17.8 Z" fill="#0073e6"/><path d="M40.8,17.8 C42.3,17.8 45.4,3.0 46.9,3.0 L56.8,3.0 C55.3,3.0 52.2,17.8 50.7,17.8 Z" fill="#fbfb00"/><path d="M26.9,3.0 L67.2,3.0 C69.1,3.0 70.0,6.0 70.0,10.4 C70.0,14.8 69.1,17.8 67.2,17.8 L26.9,17.8 Z" fill="url(#shade)"/><ellipse cx="26.9" cy="10.4" rx="2.4" ry="7.4" fill="#0073e6"/><ellipse cx="26.9" cy="10.4" rx="2.4" ry="7.4" fill="url(#shade2)" stroke="rgba(0,0,0,0.22)" stroke-width="0.6"/><rect x="2.3" y="5.9" width="25.799999999999997" height="9.299999999999999" fill="url(#cu)"/><ellipse cx="2.4" cy="10.55" rx="2.1" ry="4.449999999999999" fill="#eaa074" stroke="#c25d24" stroke-width="0.9"/></svg></div><div class="cc" style="top:811px">[L/Y]</div><div class="nm" style="top:812px"><b>REM INJ6</b><svg class="ar" width="12" height="5" viewBox="0 0 12 5"><path d="M0,2.5 H11.2 M8,0.3 L11.3,2.5 L8,4.7" stroke="#000" stroke-width="1" fill="none"/></svg>Stage 2 - Injection Output 6</div><div class="dl" style="top:834px;width:1174px"></div><div class="bg" style="top:835px;height:31px;width:1174px"></div><div class="pin" style="top:843px">A29</div><div class="wi" style="top:839px"><svg class="w" width="72" height="22" viewBox="0 0 72 22"><path d="M26.9,3.0 L67.2,3.0 C69.1,3.0 70.0,6.0 70.0,10.4 C70.0,14.8 69.1,17.8 67.2,17.8 L26.9,17.8 Z" fill="#0073e6"/><path d="M40.8,17.8 C42.3,17.8 45.4,3.0 46.9,3.0 L56.8,3.0 C55.3,3.0 52.2,17.8 50.7,17.8 Z" fill="#108c10"/><path d="M26.9,3.0 L67.2,3.0 C69.1,3.0 70.0,6.0 70.0,10.4 C70.0,14.8 69.1,17.8 67.2,17.8 L26.9,17.8 Z" fill="url(#shade)"/><ellipse cx="26.9" cy="10.4" rx="2.4" ry="7.4" fill="#0073e6"/><ellipse cx="26.9" cy="10.4" rx="2.4" ry="7.4" fill="url(#shade2)" stroke="rgba(0,0,0,0.22)" stroke-width="0.6"/><rect x="2.3" y="5.9" width="25.799999999999997" height="9.299999999999999" fill="url(#cu)"/><ellipse cx="2.4" cy="10.55" rx="2.1" ry="4.449999999999999" fill="#eaa074" stroke="#c25d24" stroke-width="0.9"/></svg></div><div class="cc" style="top:843px">[L/G]</div><div class="nm" style="top:844px"><b>REM INJ7</b><svg class="ar" width="12" height="5" viewBox="0 0 12 5"><path d="M0,2.5 H11.2 M8,0.3 L11.3,2.5 L8,4.7" stroke="#000" stroke-width="1" fill="none"/></svg>Stage 2 - Injection Output 7</div><div class="dl" style="top:866px;width:1174px"></div><div class="pin" style="top:875px">A30</div><div class="wi" style="top:871px"><svg class="w" width="72" height="22" viewBox="0 0 72 22"><path d="M26.9,3.0 L67.2,3.0 C69.1,3.0 70.0,6.0 70.0,10.4 C70.0,14.8 69.1,17.8 67.2,17.8 L26.9,17.8 Z" fill="#0073e6"/><path d="M40.8,17.8 C42.3,17.8 45.4,3.0 46.9,3.0 L56.8,3.0 C55.3,3.0 52.2,17.8 50.7,17.8 Z" fill="#9300cf"/><path d="M26.9,3.0 L67.2,3.0 C69.1,3.0 70.0,6.0 70.0,10.4 C70.0,14.8 69.1,17.8 67.2,17.8 L26.9,17.8 Z" fill="url(#shade)"/><ellipse cx="26.9" cy="10.4" rx="2.4" ry="7.4" fill="#0073e6"/><ellipse cx="26.9" cy="10.4" rx="2.4" ry="7.4" fill="url(#shade2)" stroke="rgba(0,0,0,0.22)" stroke-width="0.6"/><rect x="2.3" y="5.9" width="25.799999999999997" height="9.299999999999999" fill="url(#cu)"/><ellipse cx="2.4" cy="10.55" rx="2.1" ry="4.449999999999999" fill="#eaa074" stroke="#c25d24" stroke-width="0.9"/></svg></div><div class="cc" style="top:875px">[L/V]</div><div class="nm" style="top:876px"><b>REM INJ8</b><svg class="ar" width="12" height="5" viewBox="0 0 12 5"><path d="M0,2.5 H11.2 M8,0.3 L11.3,2.5 L8,4.7" stroke="#000" stroke-width="1" fill="none"/></svg>Stage 2 - Injection Output 8</div><div class="dl" style="top:898px;width:1174px"></div><div class="sec" style="top:911px">Slave Injector Drive RX</div><div class="dl" style="top:930px;width:1174px"></div><div class="bg" style="top:931px;height:31px;width:1174px"></div><div class="pin" style="top:939px">B1</div><div class="wi" style="top:935px"><svg class="w" width="72" height="22" viewBox="0 0 72 22"><path d="M26.9,3.0 L67.2,3.0 C69.1,3.0 70.0,6.0 70.0,10.4 C70.0,14.8 69.1,17.8 67.2,17.8 L26.9,17.8 Z" fill="#9300cf"/><path d="M40.8,17.8 C42.3,17.8 45.4,3.0 46.9,3.0 L56.8,3.0 C55.3,3.0 52.2,17.8 50.7,17.8 Z" fill="#9c5c1c"/><path d="M26.9,3.0 L67.2,3.0 C69.1,3.0 70.0,6.0 70.0,10.4 C70.0,14.8 69.1,17.8 67.2,17.8 L26.9,17.8 Z" fill="url(#shade)"/><ellipse cx="26.9" cy="10.4" rx="2.4" ry="7.4" fill="#9300cf"/><ellipse cx="26.9" cy="10.4" rx="2.4" ry="7.4" fill="url(#shade2)" stroke="rgba(0,0,0,0.22)" stroke-width="0.6"/><rect x="2.3" y="5.9" width="25.799999999999997" height="9.299999999999999" fill="url(#cu)"/><ellipse cx="2.4" cy="10.55" rx="2.1" ry="4.449999999999999" fill="#eaa074" stroke="#c25d24" stroke-width="0.9"/></svg></div><div class="cc" style="top:939px">[V/BR]</div><div class="nm" style="top:940px"><b>REM INJDRV RX1</b><svg class="ar" width="12" height="5" viewBox="0 0 12 5"><path d="M0,2.5 H11.2 M8,0.3 L11.3,2.5 L8,4.7" stroke="#000" stroke-width="1" fill="none"/></svg>From ECU for Stage 2</div><div class="dl" style="top:962px;width:1174px"></div></div>
<div class="sb" style="left:1175px"><div class="thumb" style="top:421px;height:524px"></div>
<svg class="abs" style="left:4px;top:6px" width="8" height="7" viewBox="0 0 8 7"><polygon points="0,3.6 3.5,0 7,3.6 7,6.1 3.5,2.5 0,6.1" fill="#606060"/></svg>
<svg class="abs" style="left:4px;top:951px" width="8" height="7" viewBox="0 0 8 7"><polygon points="0,0.5 3.5,4 7,0.5 7,3 3.5,6.5 0,3" fill="#606060"/></svg>
</div>
</div>
<div class="abs" style="left:12px;top:1028px;width:1832px;height:1px;background:#a0a0a0"></div>
<div class="btn" style="left:13px;width:120px">Print Report...</div>
<div class="btn" style="left:1759px;width:84px">Close</div>
<svg width="0" height="0" style="position:absolute">
<defs>
<linearGradient id="cu" x1="0" y1="0" x2="0" y2="1">
<stop offset="0" stop-color="#c98058"/><stop offset="0.1" stop-color="#de8750"/><stop offset="0.22" stop-color="#e6955f"/>
<stop offset="0.3" stop-color="#eba67d"/><stop offset="0.38" stop-color="#e9a075"/><stop offset="0.45" stop-color="#df7f45"/><stop offset="0.52" stop-color="#e79a6c"/>
<stop offset="0.56" stop-color="#f5d0b9"/><stop offset="0.78" stop-color="#f3cdb5"/><stop offset="0.86" stop-color="#c79474"/><stop offset="1" stop-color="#a9775b"/>
</linearGradient>
<linearGradient id="shade" x1="0" y1="0" x2="0" y2="1">
<stop offset="0" stop-color="#000" stop-opacity="0.08"/><stop offset="0.08" stop-color="#fff" stop-opacity="0.10"/>
<stop offset="0.55" stop-color="#000" stop-opacity="0"/><stop offset="0.9" stop-color="#000" stop-opacity="0.36"/><stop offset="1" stop-color="#000" stop-opacity="0.26"/>
</linearGradient>
<linearGradient id="shade2" x1="0" y1="0" x2="0" y2="1">
<stop offset="0" stop-color="#fff" stop-opacity="0.10"/><stop offset="0.6" stop-color="#000" stop-opacity="0"/><stop offset="1" stop-color="#000" stop-opacity="0.25"/>
</linearGradient>
</defs></svg>
</body></html>
